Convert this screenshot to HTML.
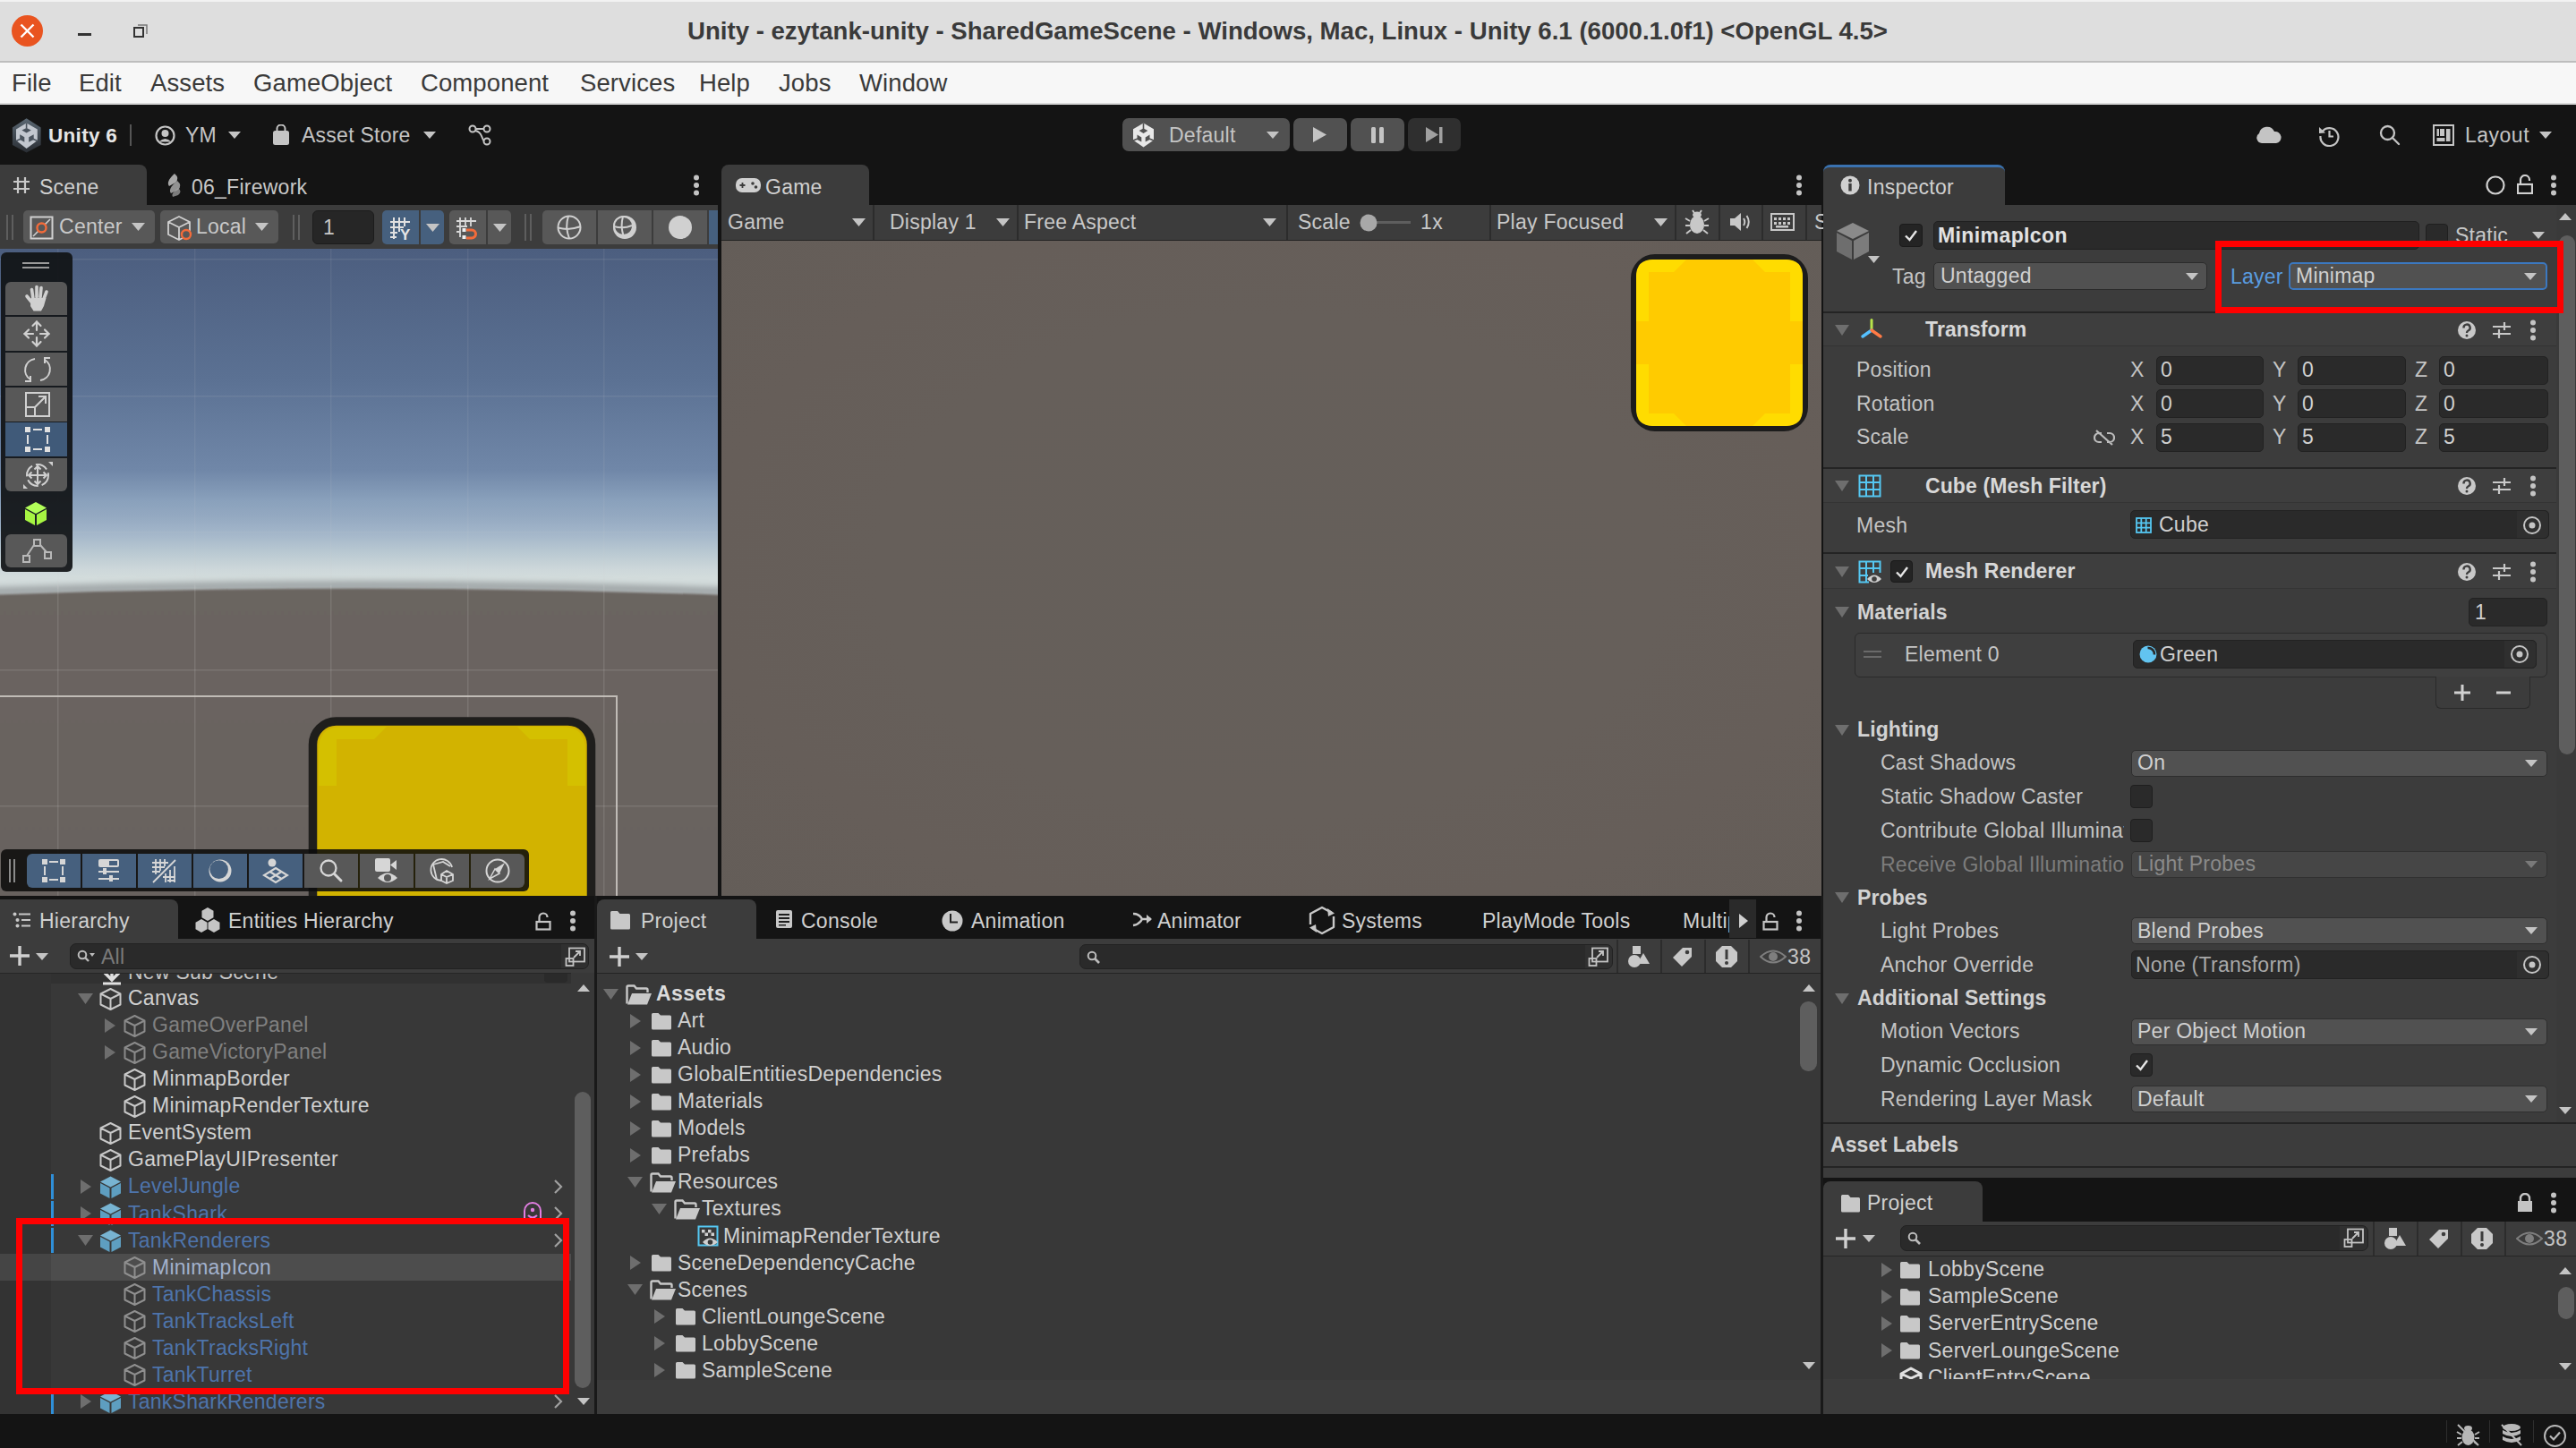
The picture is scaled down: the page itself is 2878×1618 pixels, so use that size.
<!DOCTYPE html>
<html><head><meta charset="utf-8"><style>
html,body{margin:0;padding:0;}
body{width:2878px;height:1618px;position:relative;overflow:hidden;background:#141414;font-family:"Liberation Sans", sans-serif;}
body div{position:absolute;box-sizing:border-box;}
.t{white-space:nowrap;font-family:"Liberation Sans", sans-serif;}
</style></head><body>
<div style="left:0px;top:0px;width:2878px;height:2px;background:#f2f2f2;"></div><div style="left:0px;top:2px;width:2878px;height:66px;background:#dedede;"></div><div style="left:0px;top:68px;width:2878px;height:2px;background:#bdbdbd;"></div><div style="left:0px;top:70px;width:2878px;height:45px;background:#f7f7f7;"></div><div style="left:0px;top:115px;width:2878px;height:2px;background:#d9d9d9;"></div><svg style="position:absolute;left:12px;top:16px;" width="38" height="38" viewBox="0 0 38 38"><circle cx="18.5" cy="18.5" r="17.5" fill="#e95420"/><path d="M11.5 11.5 L25.5 25.5 M25.5 11.5 L11.5 25.5" stroke="#fff" stroke-width="2.4"/></svg><div style="left:87px;top:37px;width:15px;height:3px;background:#333;"></div><svg style="position:absolute;left:148px;top:25px;" width="20" height="20" viewBox="0 0 20 20"><rect x="2" y="6" width="10" height="10" fill="none" stroke="#333" stroke-width="2"/><path d="M6 3 H16 V13" fill="none" stroke="#777" stroke-width="1.5"/></svg><div class="t" style="left:768px;top:15.0px;height:40px;line-height:40px;font-size:27.6px;color:#3a3a3a;font-weight:700;letter-spacing:0px;">Unity - ezytank-unity - SharedGameScene - Windows, Mac, Linux - Unity 6.1 (6000.1.0f1) &lt;OpenGL 4.5&gt;</div><div class="t" style="left:13px;top:73.0px;height:40px;line-height:40px;font-size:27.5px;color:#3a3a3a;font-weight:400;letter-spacing:0.1px;">File</div><div class="t" style="left:88px;top:73.0px;height:40px;line-height:40px;font-size:27.5px;color:#3a3a3a;font-weight:400;letter-spacing:0.1px;">Edit</div><div class="t" style="left:168px;top:73.0px;height:40px;line-height:40px;font-size:27.5px;color:#3a3a3a;font-weight:400;letter-spacing:0.1px;">Assets</div><div class="t" style="left:283px;top:73.0px;height:40px;line-height:40px;font-size:27.5px;color:#3a3a3a;font-weight:400;letter-spacing:0.1px;">GameObject</div><div class="t" style="left:470px;top:73.0px;height:40px;line-height:40px;font-size:27.5px;color:#3a3a3a;font-weight:400;letter-spacing:0.1px;">Component</div><div class="t" style="left:648px;top:73.0px;height:40px;line-height:40px;font-size:27.5px;color:#3a3a3a;font-weight:400;letter-spacing:0.1px;">Services</div><div class="t" style="left:781px;top:73.0px;height:40px;line-height:40px;font-size:27.5px;color:#3a3a3a;font-weight:400;letter-spacing:0.1px;">Help</div><div class="t" style="left:870px;top:73.0px;height:40px;line-height:40px;font-size:27.5px;color:#3a3a3a;font-weight:400;letter-spacing:0.1px;">Jobs</div><div class="t" style="left:960px;top:73.0px;height:40px;line-height:40px;font-size:27.5px;color:#3a3a3a;font-weight:400;letter-spacing:0.1px;">Window</div><svg style="position:absolute;left:13px;top:131px;" width="34" height="40" viewBox="0 0 34 40"><defs><linearGradient id="hx" x1="0" y1="0" x2="0" y2="1"><stop offset="0" stop-color="#5a6772"/><stop offset="1" stop-color="#2a2e34"/></linearGradient></defs><polygon points="16.6,1.2 32.6,11.6 32.6,30.9 16.6,39.5 0.9,30.9 0.9,11.6" fill="url(#hx)"/><polygon points="16.6,6.4 28.8,13.6 28.8,26.1 16.6,35 5,26.1 5,13.6" fill="#c2c7cf"/><g fill="#4a535d"><polygon points="11.4,14.5 16.6,11.9 21.8,14.5 16.6,17.6"/><polygon points="9.2,19.2 14.3,22.3 14.3,27.8 9.2,25"/><polygon points="24.7,19.2 19.2,22.3 19.2,27.8 24.7,25"/></g><g stroke="#4a535d" stroke-width="1.6"><path d="M16.6 6.4 V12.5 M5 26.5 L10 24.3 M28.8 26.5 L23.8 24.3"/></g></svg><div class="t" style="left:54px;top:136.5px;height:29px;line-height:29px;font-size:22.5px;color:#e6e6e6;font-weight:700;letter-spacing:0.3px;">Unity 6</div><div style="left:145px;top:139px;width:2px;height:24px;background:#555;"></div><svg style="position:absolute;left:173px;top:140px;" width="23" height="23" viewBox="0 0 23 23"><circle cx="11.5" cy="11.5" r="10" fill="none" stroke="#c4c4c4" stroke-width="2.2"/><circle cx="11.5" cy="9" r="4" fill="#c4c4c4"/><path d="M4.5 18.5 Q11.5 11.5 18.5 18.5" fill="#c4c4c4"/></svg><div class="t" style="left:207px;top:136.5px;height:29px;line-height:29px;font-size:23px;color:#c4c4c4;font-weight:400;letter-spacing:0.2px;">YM</div><svg style="position:absolute;left:254.5px;top:147.0px;" width="14" height="8" viewBox="0 0 14 8"><polygon points="0,0 14,0 7.0,8" fill="#c4c4c4"/></svg><svg style="position:absolute;left:304px;top:139px;" width="20" height="24" viewBox="0 0 20 24"><rect x="1" y="7" width="18" height="16" rx="2.5" fill="#c4c4c4"/><path d="M5.5 9 V4.5 A4.5 4 0 0 1 14.5 4.5 V9" fill="none" stroke="#c4c4c4" stroke-width="2"/></svg><div class="t" style="left:337px;top:136.5px;height:29px;line-height:29px;font-size:23px;color:#c4c4c4;font-weight:400;letter-spacing:0.25px;">Asset Store</div><svg style="position:absolute;left:473.0px;top:147.0px;" width="14" height="8" viewBox="0 0 14 8"><polygon points="0,0 14,0 7.0,8" fill="#c4c4c4"/></svg><svg style="position:absolute;left:523px;top:139px;" width="26" height="24" viewBox="0 0 26 24"><g fill="none" stroke="#c4c4c4" stroke-width="2"><circle cx="5" cy="5" r="3.5"/><circle cx="21" cy="5" r="3.5"/><circle cx="21" cy="19" r="3.5"/><path d="M8.5 5 H17.5 M8 7 Q13 8 15 13 Q16.5 17 17.5 18"/></g></svg><div style="left:1254px;top:132px;width:187px;height:37px;background:#515151;border-radius:7px;"></div><svg style="position:absolute;left:1264px;top:136px;" width="27" height="30" viewBox="0 0 27 30"><polygon points="13.5,1.5 25,8.3 25,20.5 13.5,28.5 2,20.5 2,8.3" fill="#e8e8e8"/><g fill="#515151"><polygon points="8.6,10 13.5,7.5 18.4,10 13.5,13"/><polygon points="6.5,14.5 11.3,17.4 11.3,22.6 6.5,20"/><polygon points="20.5,14.5 15.7,17.4 15.7,22.6 20.5,20"/></g><g stroke="#515151" stroke-width="1.6"><path d="M13.5 1.5 V8 M2 21 L7 19 M25 21 L20 19"/></g></svg><div class="t" style="left:1306px;top:136.5px;height:29px;line-height:29px;font-size:23px;color:#c4c4c4;font-weight:400;letter-spacing:0.25px;">Default</div><svg style="position:absolute;left:1415.0px;top:147.0px;" width="14" height="8" viewBox="0 0 14 8"><polygon points="0,0 14,0 7.0,8" fill="#c4c4c4"/></svg><div style="left:1445px;top:132px;width:60px;height:37px;background:#515151;border-radius:7px;"></div><svg style="position:absolute;left:1466px;top:141px;" width="17" height="19" viewBox="0 0 17 19"><polygon points="1,1 16,9.5 1,18" fill="#c4c4c4"/></svg><div style="left:1509px;top:132px;width:60px;height:37px;background:#515151;border-radius:7px;"></div><svg style="position:absolute;left:1531px;top:141px;" width="16" height="19" viewBox="0 0 16 19"><rect x="1" y="1" width="5" height="18" rx="1.5" fill="#c4c4c4"/><rect x="10" y="1" width="5" height="18" rx="1.5" fill="#c4c4c4"/></svg><div style="left:1573px;top:132px;width:59px;height:37px;background:#2f2f2f;border-radius:7px;"></div><svg style="position:absolute;left:1592px;top:141px;" width="20" height="19" viewBox="0 0 20 19"><polygon points="1,1 15,9.5 1,18" fill="#a0a0a0"/><rect x="16" y="1" width="3.5" height="18" fill="#a0a0a0"/></svg><svg style="position:absolute;left:2520px;top:140px;" width="29" height="21" viewBox="0 0 29 21"><path d="M7 20 A6 6 0 0 1 4 9 A9 9 0 0 1 21 7 A6.5 6.5 0 0 1 23 20 Z" fill="#c4c4c4"/></svg><svg style="position:absolute;left:2590px;top:139px;" width="25" height="25" viewBox="0 0 25 25"><g fill="none" stroke="#c4c4c4" stroke-width="2.2"><path d="M4.5 8 A10 10 0 1 1 2.5 13"/><path d="M12.5 7 V13.5 H17"/></g><polygon points="1,3 8,9.5 1,10" fill="#c4c4c4"/></svg><svg style="position:absolute;left:2658px;top:139px;" width="24" height="24" viewBox="0 0 24 24"><g fill="none" stroke="#c4c4c4" stroke-width="2.3"><circle cx="9.5" cy="9.5" r="7.5"/><path d="M15 15 L22 22" stroke-linecap="round"/></g></svg><svg style="position:absolute;left:2718px;top:139px;" width="24" height="24" viewBox="0 0 24 24"><rect x="1" y="1" width="22" height="22" fill="none" stroke="#c4c4c4" stroke-width="2"/><rect x="4.5" y="5" width="2.5" height="8" fill="#c4c4c4"/><rect x="8" y="5" width="5" height="8" fill="#c4c4c4"/><rect x="15" y="5" width="4.5" height="14" fill="#c4c4c4"/><rect x="4.5" y="15" width="9" height="4" fill="#c4c4c4"/></svg><div class="t" style="left:2754px;top:136.5px;height:29px;line-height:29px;font-size:23px;color:#c4c4c4;font-weight:400;letter-spacing:0.5px;">Layout</div><svg style="position:absolute;left:2837.0px;top:147.0px;" width="14" height="8" viewBox="0 0 14 8"><polygon points="0,0 14,0 7.0,8" fill="#c4c4c4"/></svg><div style="left:0px;top:184px;width:164px;height:45px;background:#3c3c3c;border-radius:0 8px 0 0;"></div><div style="left:0px;top:229px;width:802px;height:49px;background:#3c3c3c;"></div><div style="left:806px;top:184px;width:165px;height:45px;background:#3c3c3c;border-radius:8px 8px 0 0;"></div><div style="left:806px;top:229px;width:1229px;height:39px;background:#3c3c3c;"></div><div style="left:806px;top:268px;width:1229px;height:1px;background:#232323;"></div><div style="left:2037px;top:184px;width:203px;height:45px;background:#3c3c3c;border-radius:8px 8px 0 0;border-top:3px solid #3a72b0;"></div><div style="left:2037px;top:229px;width:841px;height:1027px;background:#3c3c3c;"></div><div style="left:0px;top:1005px;width:199px;height:44px;background:#3c3c3c;border-radius:0 8px 0 0;"></div><div style="left:0px;top:1049px;width:664px;height:38px;background:#3c3c3c;"></div><div style="left:0px;top:1087px;width:664px;height:493px;background:#383838;"></div><div style="left:667px;top:1005px;width:178px;height:44px;background:#3c3c3c;border-radius:8px 8px 0 0;"></div><div style="left:667px;top:1049px;width:1367px;height:39px;background:#3c3c3c;"></div><div style="left:667px;top:1087px;width:1367px;height:1px;background:#232323;"></div><div style="left:667px;top:1088px;width:1367px;height:454px;background:#383838;"></div><div style="left:667px;top:1542px;width:1367px;height:38px;background:#3c3c3c;"></div><div style="left:2037px;top:1256px;width:841px;height:47px;background:#3c3c3c;"></div><div style="left:2037px;top:1303px;width:841px;height:13px;background:#3c3c3c;"></div><div style="left:2037px;top:1320px;width:178px;height:45px;background:#3c3c3c;border-radius:8px 8px 0 0;"></div><div style="left:2037px;top:1365px;width:841px;height:38px;background:#3c3c3c;"></div><div style="left:2037px;top:1403px;width:841px;height:138px;background:#383838;"></div><div style="left:2037px;top:1541px;width:841px;height:40px;background:#3c3c3c;"></div><div style="left:0;top:278px;width:802px;height:723px;overflow:hidden;background:linear-gradient(180deg,#4c5e7f 0px,#5b7193 145px,#7087a8 247px,#8aa1bc 282px,#94a9c1 299px,#a2b5c9 317px,#bccbd3 342px,#cdd7da 358px,#d3dcdc 368px,#d3dcdc 390px);"><svg style="position:absolute;left:0px;top:0px;" width="802" height="723" viewBox="0 0 802 723"><defs><filter id="bl" filterUnits="userSpaceOnUse" x="-50" y="0" width="900" height="723"><feGaussianBlur stdDeviation="3"/></filter><filter id="bl2" filterUnits="userSpaceOnUse" x="-50" y="0" width="900" height="800"><feGaussianBlur stdDeviation="1.3"/></filter>
<linearGradient id="gh" x1="0" y1="0" x2="0" y2="1"><stop offset="0" stop-color="#6b6561"/><stop offset="1" stop-color="#68625e"/></linearGradient></defs>
<path d="M-20 384 Q 401 368.5 822 384" fill="none" stroke="#a3a9aa" stroke-width="11" filter="url(#bl)"/>
<path d="M-20 387.2 Q 401 371.75 822 387.3 L822 740 L-20 740 Z" fill="url(#gh)" filter="url(#bl2)"/></svg><svg style="position:absolute;left:0px;top:0px;" width="802" height="723" viewBox="0 0 802 723"><rect x="64" y="0" width="1.5" height="380" fill="rgba(215,215,215,0.09)"/><rect x="64" y="376" width="1.5" height="347" fill="rgba(215,215,215,0.15)"/><rect x="217" y="0" width="1.5" height="380" fill="rgba(215,215,215,0.09)"/><rect x="217" y="376" width="1.5" height="347" fill="rgba(215,215,215,0.15)"/><rect x="369" y="0" width="1.5" height="380" fill="rgba(215,215,215,0.09)"/><rect x="369" y="376" width="1.5" height="347" fill="rgba(215,215,215,0.15)"/><rect x="522" y="0" width="1.5" height="380" fill="rgba(215,215,215,0.09)"/><rect x="522" y="376" width="1.5" height="347" fill="rgba(215,215,215,0.15)"/><rect x="674" y="0" width="1.5" height="380" fill="rgba(215,215,215,0.09)"/><rect x="674" y="376" width="1.5" height="347" fill="rgba(215,215,215,0.15)"/><rect x="0" y="11" width="802" height="1.5" fill="rgba(215,215,215,0.10)"/><rect x="0" y="164" width="802" height="1.5" fill="rgba(215,215,215,0.10)"/><rect x="0" y="316" width="802" height="1.5" fill="rgba(215,215,215,0.10)"/><rect x="0" y="470" width="802" height="1.5" fill="rgba(215,215,215,0.15)"/><rect x="0" y="622" width="802" height="1.5" fill="rgba(215,215,215,0.15)"/></svg><svg style="position:absolute;left:0px;top:0px;" width="802" height="723" viewBox="0 0 802 723"><path d="M0 500 H689 V723" fill="none" stroke="#cfcac6" stroke-width="2" opacity="0.85"/></svg><svg style="position:absolute;left:0px;top:0px;" width="802" height="723" viewBox="0 0 802 723"><rect x="349.5" y="528" width="311" height="260" rx="26" fill="#d2b300" stroke="#1f1e1c" stroke-width="9.5"/>
<path d="M356 600 V560 Q356 534 382 534 H432 L418 548 H376 V600 Z M654 600 V560 Q654 534 628 534 H578 L592 548 H634 V600 Z" fill="#d5c300" opacity="0.8"/></svg></div><div style="left:1px;top:282px;width:80px;height:357px;background:rgba(17,19,22,0.93);border-radius:6px;"></div><svg style="position:absolute;left:21px;top:292px;" width="40" height="10" viewBox="0 0 40 10"><rect x="4" y="1" width="30" height="2" fill="#9a9a9a"/><rect x="4" y="6" width="30" height="2" fill="#9a9a9a"/></svg><div style="left:6px;top:315px;width:69px;height:37px;background:#585858;border-radius:6px 6px 0 0;"></div><div style="left:6px;top:354px;width:69px;height:38px;background:#585858;border-radius:0;"></div><div style="left:6px;top:394px;width:69px;height:37px;background:#585858;border-radius:0;"></div><div style="left:6px;top:433px;width:69px;height:38px;background:#585858;border-radius:0;"></div><div style="left:6px;top:472px;width:69px;height:38px;background:#405a79;border-radius:0;"></div><div style="left:6px;top:512px;width:69px;height:37px;background:#585858;border-radius:0 0 6px 6px;"></div><div style="left:6px;top:597px;width:69px;height:37px;background:#585858;border-radius:6px;"></div><svg style="position:absolute;left:26px;top:317px;" width="32" height="32" viewBox="0 0 32 32"><g stroke="#d0d0d0" stroke-width="3.6" stroke-linecap="round" fill="none"><path d="M11 17 L9.5 6.5"/><path d="M15 15 V3.5"/><path d="M19 15 L20 4.5"/><path d="M22.5 18 L26 9"/><path d="M10.5 22 L4 14"/></g><path d="M8.5 16 H25.5 L23 25 L20 30.5 H11.5 L8 25 Z" fill="#d0d0d0"/></svg><svg style="position:absolute;left:25px;top:357px;" width="32" height="32" viewBox="0 0 32 32"><g stroke="#d0d0d0" stroke-width="2.2" fill="none" stroke-linecap="round"><path d="M16 2.5 V12 M16 20 V29.5 M2.5 16 H12 M20 16 H29.5"/><path d="M11.5 7 L16 2.5 L20.5 7 M11.5 25 L16 29.5 L20.5 25 M7 11.5 L2.5 16 L7 20.5 M25 11.5 L29.5 16 L25 20.5"/></g></svg><svg style="position:absolute;left:25px;top:396px;" width="34" height="34" viewBox="0 0 34 34"><g stroke="#d0d0d0" stroke-width="2" fill="none"><path d="M14 5 A12.5 12.5 0 0 0 9 28"/><path d="M20 29 A12.5 12.5 0 0 0 25 6"/><path d="M3 30 H9 V24 M31 4 H25 V10"/></g></svg><svg style="position:absolute;left:26px;top:436px;" width="32" height="32" viewBox="0 0 32 32"><g stroke="#d0d0d0" stroke-width="2" fill="none"><rect x="3" y="3" width="26" height="26"/><rect x="3" y="19" width="10" height="10"/><path d="M13 19 L25 7 M17 7 H25 V15"/></g></svg><svg style="position:absolute;left:26px;top:475px;" width="32" height="32" viewBox="0 0 32 32"><g fill="#e0e0e0"><rect x="2" y="2" width="6" height="6"/><rect x="24" y="2" width="6" height="6"/><rect x="2" y="24" width="6" height="6"/><rect x="24" y="24" width="6" height="6"/><rect x="11" y="4" width="10" height="2"/><rect x="11" y="26" width="10" height="2"/><rect x="4" y="11" width="2" height="10"/><rect x="26" y="11" width="2" height="10"/></g></svg><svg style="position:absolute;left:25px;top:515px;" width="34" height="32" viewBox="0 0 34 32"><g stroke="#d0d0d0" stroke-width="2" fill="none"><circle cx="17" cy="16" r="12" stroke-dasharray="14 4"/><path d="M17 6 V26 M7 16 H27 M13.5 9.5 L17 6 L20.5 9.5 M13.5 22.5 L17 26 L20.5 22.5 M10.5 12.5 L7 16 L10.5 19.5 M23.5 12.5 L27 16 L23.5 19.5"/></g><polygon points="29,1 34,1 34,6" fill="#d0d0d0"/><polygon points="1,31 1,26 6,31" fill="#d0d0d0"/></svg><svg style="position:absolute;left:26px;top:560px;" width="28" height="28" viewBox="0 0 28 28"><polygon points="14,1 26,7.5 14,14 2,7.5" fill="#b2ff59"/><polygon points="2,9 13,15 13,27 2,21" fill="#a6f542"/><polygon points="26,9 15,15 15,27 26,21" fill="#a6f542"/></svg><svg style="position:absolute;left:24px;top:601px;" width="36" height="30" viewBox="0 0 36 30"><g stroke="#b8b8b8" stroke-width="2" fill="none"><rect x="14" y="2" width="7" height="7"/><rect x="2" y="20" width="7" height="7"/><rect x="26" y="16" width="7" height="7"/><path d="M14 8 L6 20 M21 8 L28 16"/></g></svg><div style="left:1px;top:949px;width:590px;height:47px;background:rgba(12,12,12,0.88);border-radius:6px;"></div><svg style="position:absolute;left:8px;top:958px;" width="10" height="30" viewBox="0 0 10 30"><rect x="2" y="2" width="2" height="26" fill="#8a8a8a"/><rect x="7" y="2" width="2" height="26" fill="#8a8a8a"/></svg><div style="left:30px;top:954px;width:60px;height:38px;background:#46607e;border-radius:6px 0 0 6px;"></div><div style="left:92px;top:954px;width:60px;height:38px;background:#46607e;border-radius:0;"></div><div style="left:154px;top:954px;width:60px;height:38px;background:#46607e;border-radius:0;"></div><div style="left:216px;top:954px;width:60px;height:38px;background:#46607e;border-radius:0;"></div><div style="left:278px;top:954px;width:60px;height:38px;background:#46607e;border-radius:0;"></div><div style="left:340px;top:954px;width:60px;height:38px;background:#585858;border-radius:0;"></div><div style="left:402px;top:954px;width:60px;height:38px;background:#585858;border-radius:0;"></div><div style="left:464px;top:954px;width:60px;height:38px;background:#585858;border-radius:0;"></div><div style="left:526px;top:954px;width:60px;height:38px;background:#585858;border-radius:0 6px 6px 0;"></div><svg style="position:absolute;left:45px;top:958px;" width="30" height="30" viewBox="0 0 30 30"><g fill="#d6d6d6"><rect x="2" y="2" width="6" height="6"/><rect x="22" y="2" width="6" height="6"/><rect x="2" y="22" width="6" height="6"/><rect x="22" y="22" width="6" height="6"/><rect x="10" y="4" width="10" height="2"/><rect x="10" y="24" width="10" height="2"/><rect x="4" y="10" width="2" height="10"/><rect x="24" y="10" width="2" height="10"/></g></svg><svg style="position:absolute;left:107px;top:958px;" width="30" height="30" viewBox="0 0 30 30"><g fill="#d6d6d6"><rect x="3" y="2" width="23" height="9" rx="2"/><rect x="3" y="15" width="23" height="2"/><rect x="3" y="23" width="23" height="2"/><rect x="8" y="12" width="4" height="7"/><rect x="15" y="20" width="4" height="7"/></g><rect x="15" y="4" width="9" height="5" fill="#46607e"/></svg><svg style="position:absolute;left:169px;top:958px;" width="30" height="30" viewBox="0 0 30 30"><g stroke="#d6d6d6" stroke-width="1.8" fill="none"><path d="M5 2 V19 M10 2 V15 M15 2 V10 M1 6 H19 M1 11 H15 M1 16 H10 M2 28 L27 3 M16 18 V28 M21 14 V28 M26 10 V28 M13 22 H27 M18 26 H27"/></g></svg><svg style="position:absolute;left:231px;top:958px;" width="30" height="30" viewBox="0 0 30 30"><circle cx="15" cy="15" r="12.5" fill="#d6d6d6"/><circle cx="13.6" cy="13.6" r="10.3" fill="#46607e"/></svg><svg style="position:absolute;left:293px;top:958px;" width="30" height="30" viewBox="0 0 30 30"><circle cx="11" cy="6" r="4.5" fill="#d6d6d6"/><g stroke="#d6d6d6" stroke-width="2.2" fill="none"><path d="M15 12 L28 20 L15 28 L2 20 Z M8.5 16 L21.5 24 M21.5 16 L8.5 24"/></g></svg><svg style="position:absolute;left:355px;top:958px;" width="30" height="30" viewBox="0 0 30 30"><g stroke="#d6d6d6" stroke-width="2.3" fill="none"><circle cx="12" cy="12" r="8.5"/><path d="M18.5 18.5 L26 26" stroke-linecap="round" stroke-width="3"/></g></svg><svg style="position:absolute;left:417px;top:958px;" width="30" height="30" viewBox="0 0 30 30"><rect x="2" y="1" width="17" height="15" rx="2" fill="#d6d6d6"/><polygon points="19,8.5 26,3 26,14" fill="#d6d6d6"/><path d="M5 23 Q16 12 27 23 Q16 33 5 23 Z" fill="#d6d6d6"/><circle cx="16" cy="23" r="4" fill="#585858"/></svg><svg style="position:absolute;left:479px;top:958px;" width="30" height="30" viewBox="0 0 30 30"><g stroke="#d6d6d6" stroke-width="1.8" fill="none"><path d="M14 26 A12 12 0 1 1 26 11"/><path d="M5 8 L16 5 L24 10 M5 8 L9 25"/><path d="M20 15 L27 19 V26 L20 29 L14 26 V19 Z M14 19 L20 22 L27 19 M20 22 V29"/></g></svg><svg style="position:absolute;left:541px;top:958px;" width="30" height="30" viewBox="0 0 30 30"><g stroke="#d6d6d6" stroke-width="2" fill="none"><circle cx="15" cy="15" r="12.5"/></g><polygon points="23,6 17,18 12,13" fill="#d6d6d6"/><polygon points="6,24 17,18 12,13" fill="none" stroke="#d6d6d6" stroke-width="1.5"/></svg><svg style="position:absolute;left:14px;top:197px;" width="20" height="20" viewBox="0 0 20 20"><g stroke="#c8c8c8" stroke-width="2.2"><path d="M6 1 V19 M14 1 V19 M1 6 H19 M1 14 H19"/></g></svg><div class="t" style="left:44px;top:194.5px;height:29px;line-height:29px;font-size:23px;color:#d0d0d0;font-weight:400;letter-spacing:0.25px;">Scene</div><svg style="position:absolute;left:184px;top:193px;" width="22" height="28" viewBox="0 0 22 28"><g fill="#a8a8a8"><path d="M11 1 Q17 6 12 11 L5 15 Q1 10 11 1 Z"/><path d="M14 9 Q20 14 15 19 L7 23 Q3 18 14 9 Z" opacity="0.85"/><path d="M15 17 Q20 21 15 25 L9 27 Q6 24 15 17 Z" opacity="0.7"/></g></svg><div class="t" style="left:214px;top:194.5px;height:29px;line-height:29px;font-size:23px;color:#c8c8c8;font-weight:400;letter-spacing:0.25px;">06_Firework</div><svg style="position:absolute;left:774px;top:195px;" width="8" height="24" viewBox="0 0 8 24"><circle cx="4" cy="3.5" r="3" fill="#c4c4c4"/><circle cx="4" cy="12" r="3" fill="#c4c4c4"/><circle cx="4" cy="20.5" r="3" fill="#c4c4c4"/></svg><svg style="position:absolute;left:6px;top:239px;" width="10" height="30" viewBox="0 0 10 30"><rect x="1" y="1" width="2" height="28" fill="#5e5e5e"/><rect x="7" y="1" width="2" height="28" fill="#5e5e5e"/></svg><div style="left:26px;top:235px;width:147px;height:37px;background:#585858;border-radius:5px;"></div><svg style="position:absolute;left:33px;top:241px;" width="27" height="27" viewBox="0 0 27 27"><rect x="1.5" y="1.5" width="24" height="24" fill="none" stroke="#d0d0d0" stroke-width="2"/><path d="M4 23 L23 4" stroke="#d0d0d0" stroke-width="1.6"/><circle cx="13.5" cy="13.5" r="5" fill="#585858" stroke="#f26b3a" stroke-width="2.4"/></svg><div class="t" style="left:66px;top:239.0px;height:29px;line-height:29px;font-size:23px;color:#c8c8c8;font-weight:400;letter-spacing:0.3px;">Center</div><svg style="position:absolute;left:146.5px;top:249.0px;" width="15" height="9" viewBox="0 0 15 9"><polygon points="0,0 15,0 7.5,9" fill="#c4c4c4"/></svg><div style="left:179px;top:235px;width:132px;height:37px;background:#585858;border-radius:5px;"></div><svg style="position:absolute;left:186px;top:240px;" width="30" height="30" viewBox="0 0 30 30"><g fill="none" stroke="#d0d0d0" stroke-width="1.8" stroke-linejoin="round"><path d="M14 2 L26 8 L26 22 L14 28 L2 22 L2 8 Z M2 8 L14 14 L26 8 M14 14 V28"/></g><circle cx="22" cy="22" r="5" fill="#585858" stroke="#f26b3a" stroke-width="2.4"/></svg><div class="t" style="left:219px;top:239.0px;height:29px;line-height:29px;font-size:23px;color:#c8c8c8;font-weight:400;letter-spacing:0.25px;">Local</div><svg style="position:absolute;left:284.5px;top:249.0px;" width="15" height="9" viewBox="0 0 15 9"><polygon points="0,0 15,0 7.5,9" fill="#c4c4c4"/></svg><svg style="position:absolute;left:326px;top:239px;" width="10" height="30" viewBox="0 0 10 30"><rect x="1" y="1" width="2" height="28" fill="#5e5e5e"/><rect x="7" y="1" width="2" height="28" fill="#5e5e5e"/></svg><div style="left:349px;top:235px;width:69px;height:38px;background:#262626;border-radius:6px;border:1px solid #1c1c1c;"></div><div class="t" style="left:361px;top:239.5px;height:29px;line-height:29px;font-size:23px;color:#c8c8c8;font-weight:400;letter-spacing:0.2px;">1</div><div style="left:427px;top:235px;width:41px;height:38px;background:#46607e;border-radius:5px 0 0 5px;"></div><div style="left:470px;top:235px;width:26px;height:38px;background:#46607e;border-radius:0 5px 5px 0;"></div><svg style="position:absolute;left:434px;top:241px;" width="28" height="27" viewBox="0 0 28 27"><g stroke="#e0e0e0" stroke-width="2"><path d="M6 2 V26 M12 2 V18 M18 2 V12 M2 7 H24 M2 13 H17 M2 19 H10 M2 24 H9"/></g><text x="13" y="27" font-family="Liberation Sans" font-weight="700" font-size="17" fill="#e6e6e6">Y</text></svg><svg style="position:absolute;left:475.5px;top:249.5px;" width="15" height="9" viewBox="0 0 15 9"><polygon points="0,0 15,0 7.5,9" fill="#c4c4c4"/></svg><div style="left:502px;top:235px;width:41px;height:38px;background:#585858;border-radius:5px 0 0 5px;"></div><div style="left:545px;top:235px;width:26px;height:38px;background:#585858;border-radius:0 5px 5px 0;"></div><svg style="position:absolute;left:508px;top:241px;" width="30" height="28" viewBox="0 0 30 28"><g stroke="#d8d8d8" stroke-width="1.8"><path d="M6 2 V24 M12 2 V12 M18 2 V12 M2 6 H24 M2 12 H14 M2 18 H6"/></g><rect x="8.5" y="14" width="4" height="4" fill="#eee"/><rect x="8.5" y="22" width="4" height="4" fill="#eee"/><path d="M13 16 H19 A4.5 4.5 0 0 1 19 25 H13" fill="none" stroke="#f26b3a" stroke-width="3"/></svg><svg style="position:absolute;left:550.5px;top:249.5px;" width="15" height="9" viewBox="0 0 15 9"><polygon points="0,0 15,0 7.5,9" fill="#c4c4c4"/></svg><svg style="position:absolute;left:582px;top:238px;" width="14" height="32" viewBox="0 0 14 32"><rect x="4" y="1" width="2" height="30" fill="#5e5e5e"/><rect x="10" y="1" width="2" height="30" fill="#5e5e5e"/></svg><div style="left:606px;top:235px;width:60px;height:38px;background:#585858;border-radius:5px 0 0 5px;"></div><div style="left:668px;top:235px;width:60px;height:38px;background:#585858;"></div><div style="left:730px;top:235px;width:60px;height:38px;background:#585858;"></div><div style="left:792px;top:235px;width:10px;height:38px;background:#46607e;"></div><svg style="position:absolute;left:622px;top:240px;" width="28" height="28" viewBox="0 0 28 28"><g fill="none" stroke="#d0d0d0" stroke-width="2"><circle cx="14" cy="14" r="12.5"/><path d="M13 1.5 Q9 14 14 26.5 M1.5 14.5 Q14 18 26.5 13"/></g></svg><svg style="position:absolute;left:684px;top:240px;" width="28" height="28" viewBox="0 0 28 28"><circle cx="14" cy="14" r="13" fill="#d0d0d0"/><circle cx="12.5" cy="12.5" r="10.5" fill="#585858"/><g fill="none" stroke="#d0d0d0" stroke-width="2"><circle cx="12.5" cy="12.5" r="10.5"/><path d="M12 2 Q9 13 12.5 23 M2 13 Q12.5 16 22 12"/></g></svg><svg style="position:absolute;left:746px;top:240px;" width="28" height="28" viewBox="0 0 28 28"><circle cx="14" cy="14" r="13" fill="#d0d0d0"/></svg><svg style="position:absolute;left:822px;top:198px;" width="28" height="18" viewBox="0 0 28 18"><path d="M7 1 H21 A7 7 0 0 1 28 8 V10 A7 7 0 0 1 21 17 H7 A7 7 0 0 1 0 10 V8 A7 7 0 0 1 7 1 Z" fill="#d0d0d0"/><path d="M4.5 9 H10.5 M7.5 6 V12" stroke="#3c3c3c" stroke-width="1.8"/><circle cx="19" cy="7" r="1.8" fill="#3c3c3c"/><circle cx="22.5" cy="11" r="1.8" fill="#3c3c3c"/></svg><div class="t" style="left:855px;top:194.5px;height:29px;line-height:29px;font-size:23px;color:#d0d0d0;font-weight:400;letter-spacing:0.25px;">Game</div><svg style="position:absolute;left:2006px;top:195px;" width="8" height="24" viewBox="0 0 8 24"><circle cx="4" cy="3.5" r="3" fill="#c4c4c4"/><circle cx="4" cy="12" r="3" fill="#c4c4c4"/><circle cx="4" cy="20.5" r="3" fill="#c4c4c4"/></svg><div style="left:975px;top:229px;width:2px;height:39px;background:#2c2c2c;"></div><div class="t" style="left:813px;top:234.0px;height:29px;line-height:29px;font-size:23px;color:#c8c8c8;font-weight:400;letter-spacing:0.25px;">Game</div><svg style="position:absolute;left:951.5px;top:244.0px;" width="15" height="9" viewBox="0 0 15 9"><polygon points="0,0 15,0 7.5,9" fill="#c4c4c4"/></svg><div style="left:1136px;top:229px;width:2px;height:39px;background:#2c2c2c;"></div><div class="t" style="left:994px;top:234.0px;height:29px;line-height:29px;font-size:23px;color:#c8c8c8;font-weight:400;letter-spacing:0.25px;">Display 1</div><svg style="position:absolute;left:1112.5px;top:244.0px;" width="15" height="9" viewBox="0 0 15 9"><polygon points="0,0 15,0 7.5,9" fill="#c4c4c4"/></svg><div class="t" style="left:1144px;top:234.0px;height:29px;line-height:29px;font-size:23px;color:#c8c8c8;font-weight:400;letter-spacing:0.25px;">Free Aspect</div><svg style="position:absolute;left:1410.5px;top:244.0px;" width="15" height="9" viewBox="0 0 15 9"><polygon points="0,0 15,0 7.5,9" fill="#c4c4c4"/></svg><div style="left:1437px;top:229px;width:2px;height:39px;background:#2c2c2c;"></div><div style="left:1664px;top:229px;width:2px;height:39px;background:#2c2c2c;"></div><div style="left:1871px;top:229px;width:2px;height:39px;background:#2c2c2c;"></div><div style="left:1920px;top:229px;width:2px;height:39px;background:#2c2c2c;"></div><div style="left:1968px;top:229px;width:2px;height:39px;background:#2c2c2c;"></div><div style="left:2017px;top:229px;width:2px;height:39px;background:#2c2c2c;"></div><div class="t" style="left:1450px;top:234.0px;height:29px;line-height:29px;font-size:23px;color:#c8c8c8;font-weight:400;letter-spacing:0.25px;">Scale</div><div style="left:1528px;top:247px;width:48px;height:3px;background:#5e5e5e;"></div><svg style="position:absolute;left:1519px;top:239px;" width="20" height="20" viewBox="0 0 20 20"><circle cx="10" cy="10" r="9.5" fill="#a8a8a8"/></svg><div class="t" style="left:1587px;top:234.0px;height:29px;line-height:29px;font-size:23px;color:#c8c8c8;font-weight:400;letter-spacing:0.5px;">1x</div><div class="t" style="left:1672px;top:234.0px;height:29px;line-height:29px;font-size:23px;color:#c8c8c8;font-weight:400;letter-spacing:0.25px;">Play Focused</div><svg style="position:absolute;left:1847.5px;top:244.0px;" width="15" height="9" viewBox="0 0 15 9"><polygon points="0,0 15,0 7.5,9" fill="#c4c4c4"/></svg><svg style="position:absolute;left:1882px;top:234px;" width="28" height="29" viewBox="0 0 28 29"><g fill="#c8c8c8"><ellipse cx="14" cy="17" rx="8" ry="10"/><ellipse cx="14" cy="6" rx="5" ry="3.5"/></g><g stroke="#c8c8c8" stroke-width="2" fill="none"><path d="M1 10 L6 13 M27 10 L22 13 M1 18 H6 M27 18 H22 M2 27 L7 23 M26 27 L21 23 M9 1 L11 4 M19 1 L17 4"/></g></svg><svg style="position:absolute;left:1932px;top:237px;" width="24" height="22" viewBox="0 0 24 22"><g fill="#c8c8c8"><rect x="1" y="7" width="5" height="8"/><polygon points="6,7 13,1 13,21 6,15"/></g><g stroke="#c8c8c8" stroke-width="2" fill="none"><path d="M16 7 Q18.5 11 16 15 M19.5 4 Q24 11 19.5 18"/></g></svg><svg style="position:absolute;left:1978px;top:238px;" width="27" height="20" viewBox="0 0 27 20"><rect x="1" y="1" width="25" height="18" fill="none" stroke="#c8c8c8" stroke-width="2"/><g fill="#c8c8c8"><rect x="4" y="5" width="3" height="3"/><rect x="9" y="5" width="3" height="3"/><rect x="14" y="5" width="3" height="3"/><rect x="19" y="5" width="3" height="3"/><rect x="4" y="10" width="3" height="3"/><rect x="9" y="10" width="3" height="3"/><rect x="14" y="10" width="3" height="3"/><rect x="19" y="10" width="3" height="3"/><rect x="6" y="14" width="14" height="2.5"/></g></svg><div class="t" style="left:2027px;top:234.0px;height:29px;line-height:29px;font-size:23px;color:#c8c8c8;font-weight:400;letter-spacing:0.2px;">S</div><div style="left:806px;top:269px;width:1229px;height:732px;overflow:hidden;background:radial-gradient(ellipse 1250px 800px at 614px 364px,#655f5a 0%,#665f5a 35%,#665e59 50%,#635d58 75%,#615b56 100%);"><svg style="position:absolute;left:0px;top:0px;" width="1229" height="732" viewBox="0 0 1229 732"><rect x="1019" y="18" width="192" height="192" rx="24" fill="#ffcb00" stroke="#1c1c1c" stroke-width="6"/>
<path d="M1022 90 V40 Q1022 21 1041 21 H1078 L1064 35 H1036 V90 Z M1208 90 V40 Q1208 21 1189 21 H1152 L1166 35 H1194 V90 Z M1022 138 V188 Q1022 207 1041 207 H1078 L1064 193 H1036 V138 Z M1208 138 V188 Q1208 207 1189 207 H1152 L1166 193 H1194 V138 Z" fill="#ffdc00"/></svg></div><svg style="position:absolute;left:2056px;top:196px;" width="22" height="22" viewBox="0 0 22 22"><circle cx="11" cy="11" r="10.5" fill="#d0d0d0"/><rect x="9.3" y="9" width="3.4" height="8.5" fill="#3c3c3c"/><circle cx="11" cy="5.8" r="2" fill="#3c3c3c"/></svg><div class="t" style="left:2086px;top:194.5px;height:29px;line-height:29px;font-size:23px;color:#d0d0d0;font-weight:400;letter-spacing:0.25px;">Inspector</div><svg style="position:absolute;left:2777px;top:196px;" width="22" height="22" viewBox="0 0 22 22"><circle cx="11" cy="11" r="9.5" fill="none" stroke="#d0d0d0" stroke-width="2.2"/></svg><svg style="position:absolute;left:2812px;top:195px;" width="18" height="22" viewBox="0 0 18 22"><rect x="1" y="11" width="16" height="10" fill="none" stroke="#d0d0d0" stroke-width="2.2"/><path d="M4 11 V6 A5 5 0 0 1 14 6 V7" fill="none" stroke="#d0d0d0" stroke-width="2.2"/></svg><svg style="position:absolute;left:2849px;top:195px;" width="8" height="24" viewBox="0 0 8 24"><circle cx="4" cy="3.5" r="3" fill="#c4c4c4"/><circle cx="4" cy="12" r="3" fill="#c4c4c4"/><circle cx="4" cy="20.5" r="3" fill="#c4c4c4"/></svg><div style="left:2037px;top:229px;width:819px;height:119px;background:#3c3c3c;"></div><div style="left:2037px;top:348px;width:819px;height:2px;background:#242424;"></div><svg style="position:absolute;left:2050px;top:248px;" width="42" height="44" viewBox="0 0 42 44"><polygon points="20,1 38,10 20,19 2,10" fill="#8a8a8a"/><polygon points="2,12 19,21 19,42 2,33" fill="#6e6e6e"/><polygon points="38,12 21,21 21,42 38,33" fill="#7c7c7c"/></svg><svg style="position:absolute;left:2086.5px;top:286.0px;" width="13" height="8" viewBox="0 0 13 8"><polygon points="0,0 13,0 6.5,8" fill="#c4c4c4"/></svg><div style="left:2122px;top:250px;width:26px;height:26px;background:#242424;border-radius:4px;border:1px solid #1a1a1a;"></div><svg style="position:absolute;left:2126px;top:254px;" width="18" height="18" viewBox="0 0 18 18"><path d="M3 9.5 L7.5 14 L15 4" fill="none" stroke="#e6e6e6" stroke-width="2.4"/></svg><div style="left:2160px;top:247px;width:543px;height:32px;background:#2a2a2a;border-radius:5px;border:1px solid #202020;"></div><div class="t" style="left:2165px;top:248.5px;height:29px;line-height:29px;font-size:23px;color:#e2e2e2;font-weight:700;letter-spacing:0.4px;">MinimapIcon</div><div style="left:2710px;top:250px;width:25px;height:25px;background:#2a2a2a;border-radius:4px;border:1px solid #1f1f1f;"></div><div class="t" style="left:2743px;top:248.5px;height:29px;line-height:29px;font-size:23px;color:#c8c8c8;font-weight:400;letter-spacing:0.25px;">Static</div><svg style="position:absolute;left:2829.0px;top:259.0px;" width="14" height="8" viewBox="0 0 14 8"><polygon points="0,0 14,0 7.0,8" fill="#c4c4c4"/></svg><div class="t" style="left:2114px;top:294.5px;height:29px;line-height:29px;font-size:23px;color:#c4c4c4;font-weight:400;letter-spacing:0.25px;">Tag</div><div style="left:2160px;top:293px;width:306px;height:31px;background:#515151;border-radius:5px;border:1px solid #2b2b2b;"></div><div class="t" style="left:2168px;top:294.0px;height:29px;line-height:29px;font-size:23px;color:#d0d0d0;font-weight:400;letter-spacing:0.25px;">Untagged</div><svg style="position:absolute;left:2442.0px;top:305.0px;" width="14" height="8" viewBox="0 0 14 8"><polygon points="0,0 14,0 7.0,8" fill="#c4c4c4"/></svg><div class="t" style="left:2492px;top:294.5px;height:29px;line-height:29px;font-size:23px;color:#5a9ce0;font-weight:400;letter-spacing:0.25px;">Layer</div><div style="left:2557px;top:293px;width:289px;height:31px;background:#515151;border-radius:5px;border:2px solid #3b78c0;"></div><div class="t" style="left:2565px;top:294.0px;height:29px;line-height:29px;font-size:23px;color:#d0d0d0;font-weight:400;letter-spacing:0.25px;">Minimap</div><svg style="position:absolute;left:2820.0px;top:305.0px;" width="14" height="8" viewBox="0 0 14 8"><polygon points="0,0 14,0 7.0,8" fill="#c4c4c4"/></svg><div style="left:2037px;top:350px;width:819px;height:37px;background:#3e3e3e;"></div><div style="left:2037px;top:386px;width:819px;height:1px;background:#343434;"></div><svg style="position:absolute;left:2050.0px;top:362.5px;" width="16" height="12" viewBox="0 0 16 12"><polygon points="0,0 16,0 8.0,12" fill="#6e6e6e"/></svg><svg style="position:absolute;left:2077px;top:354.5px;" width="28" height="28" viewBox="0 0 28 28"><rect x="12.5" y="1" width="3" height="13" rx="1.5" fill="#b7e34a"/><path d="M14 14 L4 21" stroke="#55c0ff" stroke-width="3.4" stroke-linecap="round"/><path d="M14 14 L24 21" stroke="#ff7a45" stroke-width="3.4" stroke-linecap="round"/></svg><div class="t" style="left:2151px;top:354.0px;height:29px;line-height:29px;font-size:23px;color:#d8d8d8;font-weight:700;letter-spacing:0.1px;">Transform</div><svg style="position:absolute;left:2745px;top:357.5px;" width="22" height="22" viewBox="0 0 22 22"><circle cx="11" cy="11" r="10" fill="#c8c8c8"/><path d="M7.5 8.5 A3.6 3.6 0 1 1 12.5 11.5 Q11 12.3 11 14" fill="none" stroke="#3e3e3e" stroke-width="2.4"/><circle cx="11" cy="17" r="1.5" fill="#3e3e3e"/></svg><svg style="position:absolute;left:2784px;top:357.5px;" width="22" height="22" viewBox="0 0 22 22"><g stroke="#c8c8c8" stroke-width="2.2"><path d="M1 7 H21 M1 15 H21"/><path d="M14 2 V11 M8 10 V20"/></g></svg><svg style="position:absolute;left:2826px;top:356.5px;" width="8" height="24" viewBox="0 0 8 24"><circle cx="4" cy="3.5" r="3" fill="#c4c4c4"/><circle cx="4" cy="12" r="3" fill="#c4c4c4"/><circle cx="4" cy="20.5" r="3" fill="#c4c4c4"/></svg><div style="left:2037px;top:387px;width:819px;height:136px;background:#3c3c3c;"></div><div class="t" style="left:2074px;top:399.0px;height:29px;line-height:29px;font-size:23px;color:#c4c4c4;font-weight:400;letter-spacing:0.25px;">Position</div><div class="t" style="left:2380px;top:399.0px;height:29px;line-height:29px;font-size:23px;color:#c4c4c4;font-weight:400;letter-spacing:0.2px;">X</div><div style="left:2409px;top:397.5px;width:120px;height:32.0px;background:#2a2a2a;border-radius:5px;border:1px solid #222;"></div><div class="t" style="left:2414px;top:399.0px;height:29px;line-height:29px;font-size:23px;color:#d0d0d0;font-weight:400;letter-spacing:0.2px;">0</div><div class="t" style="left:2539px;top:399.0px;height:29px;line-height:29px;font-size:23px;color:#c4c4c4;font-weight:400;letter-spacing:0.2px;">Y</div><div style="left:2567px;top:397.5px;width:121px;height:32.0px;background:#2a2a2a;border-radius:5px;border:1px solid #222;"></div><div class="t" style="left:2572px;top:399.0px;height:29px;line-height:29px;font-size:23px;color:#d0d0d0;font-weight:400;letter-spacing:0.2px;">0</div><div class="t" style="left:2698px;top:399.0px;height:29px;line-height:29px;font-size:23px;color:#c4c4c4;font-weight:400;letter-spacing:0.2px;">Z</div><div style="left:2725px;top:397.5px;width:122px;height:32.0px;background:#2a2a2a;border-radius:5px;border:1px solid #222;"></div><div class="t" style="left:2730px;top:399.0px;height:29px;line-height:29px;font-size:23px;color:#d0d0d0;font-weight:400;letter-spacing:0.2px;">0</div><div class="t" style="left:2074px;top:436.5px;height:29px;line-height:29px;font-size:23px;color:#c4c4c4;font-weight:400;letter-spacing:0.25px;">Rotation</div><div class="t" style="left:2380px;top:436.5px;height:29px;line-height:29px;font-size:23px;color:#c4c4c4;font-weight:400;letter-spacing:0.2px;">X</div><div style="left:2409px;top:435px;width:120px;height:32px;background:#2a2a2a;border-radius:5px;border:1px solid #222;"></div><div class="t" style="left:2414px;top:436.5px;height:29px;line-height:29px;font-size:23px;color:#d0d0d0;font-weight:400;letter-spacing:0.2px;">0</div><div class="t" style="left:2539px;top:436.5px;height:29px;line-height:29px;font-size:23px;color:#c4c4c4;font-weight:400;letter-spacing:0.2px;">Y</div><div style="left:2567px;top:435px;width:121px;height:32px;background:#2a2a2a;border-radius:5px;border:1px solid #222;"></div><div class="t" style="left:2572px;top:436.5px;height:29px;line-height:29px;font-size:23px;color:#d0d0d0;font-weight:400;letter-spacing:0.2px;">0</div><div class="t" style="left:2698px;top:436.5px;height:29px;line-height:29px;font-size:23px;color:#c4c4c4;font-weight:400;letter-spacing:0.2px;">Z</div><div style="left:2725px;top:435px;width:122px;height:32px;background:#2a2a2a;border-radius:5px;border:1px solid #222;"></div><div class="t" style="left:2730px;top:436.5px;height:29px;line-height:29px;font-size:23px;color:#d0d0d0;font-weight:400;letter-spacing:0.2px;">0</div><div class="t" style="left:2074px;top:474.0px;height:29px;line-height:29px;font-size:23px;color:#c4c4c4;font-weight:400;letter-spacing:0.25px;">Scale</div><svg style="position:absolute;left:2339px;top:478.5px;" width="24" height="20" viewBox="0 0 24 20"><g fill="none" stroke="#bcbcbc" stroke-width="2.2"><path d="M9 5 H6 A5 5 0 0 0 6 15 H9 M15 5 H18 A5 5 0 0 1 18 15 H15 M3 2 L21 18"/></g></svg><div class="t" style="left:2380px;top:474.0px;height:29px;line-height:29px;font-size:23px;color:#c4c4c4;font-weight:400;letter-spacing:0.2px;">X</div><div style="left:2409px;top:472.5px;width:120px;height:32.0px;background:#2a2a2a;border-radius:5px;border:1px solid #222;"></div><div class="t" style="left:2414px;top:474.0px;height:29px;line-height:29px;font-size:23px;color:#d0d0d0;font-weight:400;letter-spacing:0.2px;">5</div><div class="t" style="left:2539px;top:474.0px;height:29px;line-height:29px;font-size:23px;color:#c4c4c4;font-weight:400;letter-spacing:0.2px;">Y</div><div style="left:2567px;top:472.5px;width:121px;height:32.0px;background:#2a2a2a;border-radius:5px;border:1px solid #222;"></div><div class="t" style="left:2572px;top:474.0px;height:29px;line-height:29px;font-size:23px;color:#d0d0d0;font-weight:400;letter-spacing:0.2px;">5</div><div class="t" style="left:2698px;top:474.0px;height:29px;line-height:29px;font-size:23px;color:#c4c4c4;font-weight:400;letter-spacing:0.2px;">Z</div><div style="left:2725px;top:472.5px;width:122px;height:32.0px;background:#2a2a2a;border-radius:5px;border:1px solid #222;"></div><div class="t" style="left:2730px;top:474.0px;height:29px;line-height:29px;font-size:23px;color:#d0d0d0;font-weight:400;letter-spacing:0.2px;">5</div><div style="left:2037px;top:522px;width:819px;height:2px;background:#242424;"></div><div style="left:2037px;top:524px;width:819px;height:38px;background:#3e3e3e;"></div><div style="left:2037px;top:561px;width:819px;height:1px;background:#343434;"></div><svg style="position:absolute;left:2050.0px;top:537.0px;" width="16" height="12" viewBox="0 0 16 12"><polygon points="0,0 16,0 8.0,12" fill="#6e6e6e"/></svg><svg style="position:absolute;left:2076px;top:530.0px;" width="26" height="26" viewBox="0 0 26 26"><g fill="none" stroke="#55c7f2" stroke-width="2"><rect x="1.5" y="1.5" width="23" height="23"/><path d="M9 1.5 V24.5 M17 1.5 V24.5 M1.5 9 H24.5 M1.5 17 H24.5"/></g></svg><div class="t" style="left:2151px;top:528.5px;height:29px;line-height:29px;font-size:23px;color:#d8d8d8;font-weight:700;letter-spacing:0.1px;">Cube (Mesh Filter)</div><svg style="position:absolute;left:2745px;top:532.0px;" width="22" height="22" viewBox="0 0 22 22"><circle cx="11" cy="11" r="10" fill="#c8c8c8"/><path d="M7.5 8.5 A3.6 3.6 0 1 1 12.5 11.5 Q11 12.3 11 14" fill="none" stroke="#3e3e3e" stroke-width="2.4"/><circle cx="11" cy="17" r="1.5" fill="#3e3e3e"/></svg><svg style="position:absolute;left:2784px;top:532.0px;" width="22" height="22" viewBox="0 0 22 22"><g stroke="#c8c8c8" stroke-width="2.2"><path d="M1 7 H21 M1 15 H21"/><path d="M14 2 V11 M8 10 V20"/></g></svg><svg style="position:absolute;left:2826px;top:531.0px;" width="8" height="24" viewBox="0 0 8 24"><circle cx="4" cy="3.5" r="3" fill="#c4c4c4"/><circle cx="4" cy="12" r="3" fill="#c4c4c4"/><circle cx="4" cy="20.5" r="3" fill="#c4c4c4"/></svg><div style="left:2037px;top:562px;width:819px;height:55px;background:#3c3c3c;"></div><div class="t" style="left:2074px;top:572.5px;height:29px;line-height:29px;font-size:23px;color:#c4c4c4;font-weight:400;letter-spacing:0.25px;">Mesh</div><div style="left:2380px;top:570px;width:468px;height:32px;background:#2a2a2a;border-radius:5px;border:1px solid #222;"></div><div style="left:2812px;top:571px;width:35px;height:30px;background:#2f2f2f;border-radius:0 5px 5px 0;"></div><svg style="position:absolute;left:2386px;top:578px;" width="18" height="18" viewBox="0 0 18 18"><g fill="none" stroke="#55c7f2" stroke-width="1.8"><rect x="1" y="1" width="16" height="16"/><path d="M6.3 1 V17 M11.7 1 V17 M1 6.3 H17 M1 11.7 H17"/></g></svg><div class="t" style="left:2412px;top:571.5px;height:29px;line-height:29px;font-size:23px;color:#d0d0d0;font-weight:400;letter-spacing:0.25px;">Cube</div><svg style="position:absolute;left:2818px;top:576px;" width="22" height="22" viewBox="0 0 22 22"><circle cx="11" cy="11" r="9" fill="none" stroke="#c4c4c4" stroke-width="2"/><circle cx="11" cy="11" r="3.5" fill="#c4c4c4"/></svg><div style="left:2037px;top:617px;width:819px;height:2px;background:#242424;"></div><div style="left:2037px;top:619px;width:819px;height:39px;background:#3e3e3e;"></div><div style="left:2037px;top:657px;width:819px;height:1px;background:#343434;"></div><svg style="position:absolute;left:2050.0px;top:632.5px;" width="16" height="12" viewBox="0 0 16 12"><polygon points="0,0 16,0 8.0,12" fill="#6e6e6e"/></svg><svg style="position:absolute;left:2076px;top:625.5px;" width="27" height="28" viewBox="0 0 27 28"><g fill="none" stroke="#55c7f2" stroke-width="2"><path d="M12 24.5 H1.5 V1.5 H24.5 V14 M9 1.5 V24.5 M17 1.5 V14 M1.5 9 H24.5 M1.5 17 H11"/></g><path d="M10 21 Q18 12 26 21 Q18 29 10 21 Z" fill="#d0d0d0"/><circle cx="18" cy="21" r="2.8" fill="#3e3e3e"/></svg><div style="left:2112px;top:626.0px;width:25px;height:25.0px;background:#242424;border-radius:4px;border:1px solid #1a1a1a;"></div><svg style="position:absolute;left:2115.5px;top:629.5px;" width="18" height="18" viewBox="0 0 18 18"><path d="M3 9.5 L7.5 14 L15 4" fill="none" stroke="#e6e6e6" stroke-width="2.4"/></svg><div class="t" style="left:2151px;top:624.0px;height:29px;line-height:29px;font-size:23px;color:#d8d8d8;font-weight:700;letter-spacing:0.1px;">Mesh Renderer</div><svg style="position:absolute;left:2745px;top:627.5px;" width="22" height="22" viewBox="0 0 22 22"><circle cx="11" cy="11" r="10" fill="#c8c8c8"/><path d="M7.5 8.5 A3.6 3.6 0 1 1 12.5 11.5 Q11 12.3 11 14" fill="none" stroke="#3e3e3e" stroke-width="2.4"/><circle cx="11" cy="17" r="1.5" fill="#3e3e3e"/></svg><svg style="position:absolute;left:2784px;top:627.5px;" width="22" height="22" viewBox="0 0 22 22"><g stroke="#c8c8c8" stroke-width="2.2"><path d="M1 7 H21 M1 15 H21"/><path d="M14 2 V11 M8 10 V20"/></g></svg><svg style="position:absolute;left:2826px;top:626.5px;" width="8" height="24" viewBox="0 0 8 24"><circle cx="4" cy="3.5" r="3" fill="#c4c4c4"/><circle cx="4" cy="12" r="3" fill="#c4c4c4"/><circle cx="4" cy="20.5" r="3" fill="#c4c4c4"/></svg><div style="left:2037px;top:658px;width:819px;height:597px;background:#3c3c3c;"></div><svg style="position:absolute;left:2050.0px;top:678.0px;" width="16" height="12" viewBox="0 0 16 12"><polygon points="0,0 16,0 8.0,12" fill="#6e6e6e"/></svg><div class="t" style="left:2075px;top:669.5px;height:29px;line-height:29px;font-size:23px;color:#d2d2d2;font-weight:700;letter-spacing:0.1px;">Materials</div><div style="left:2758px;top:668px;width:88px;height:32px;background:#2a2a2a;border-radius:5px;border:1px solid #222;"></div><div class="t" style="left:2765px;top:669.5px;height:29px;line-height:29px;font-size:23px;color:#d0d0d0;font-weight:400;letter-spacing:0.2px;">1</div><div style="left:2072px;top:707px;width:774px;height:50px;background:#3f3f3f;border-radius:6px;border:1px solid #2a2a2a;"></div><svg style="position:absolute;left:2081px;top:724px;" width="22" height="14" viewBox="0 0 22 14"><rect x="1" y="3" width="20" height="2" fill="#6a6a6a"/><rect x="1" y="9" width="20" height="2" fill="#6a6a6a"/></svg><div class="t" style="left:2128px;top:716.5px;height:29px;line-height:29px;font-size:23px;color:#c4c4c4;font-weight:400;letter-spacing:0.25px;">Element 0</div><div style="left:2383px;top:715px;width:451px;height:32px;background:#2a2a2a;border-radius:5px;border:1px solid #222;"></div><div style="left:2798px;top:716px;width:35px;height:30px;background:#2f2f2f;border-radius:0 5px 5px 0;"></div><svg style="position:absolute;left:2389px;top:720px;" width="22" height="22" viewBox="0 0 22 22"><circle cx="11" cy="11" r="9.5" fill="#62c4f0"/><path d="M10.5 4 A7 7 0 0 1 18 11.5" stroke="#2a2a2a" stroke-width="2.6" fill="none"/></svg><div class="t" style="left:2413px;top:716.5px;height:29px;line-height:29px;font-size:23px;color:#d0d0d0;font-weight:400;letter-spacing:0.25px;">Green</div><svg style="position:absolute;left:2804px;top:720px;" width="22" height="22" viewBox="0 0 22 22"><circle cx="11" cy="11" r="9" fill="none" stroke="#c4c4c4" stroke-width="2"/><circle cx="11" cy="11" r="3.5" fill="#c4c4c4"/></svg><div style="left:2721px;top:756px;width:106px;height:36px;background:#3c3c3c;border-radius:0 0 6px 6px;border:1px solid #2a2a2a;border-top:none;"></div><svg style="position:absolute;left:2740px;top:763px;" width="22" height="22" viewBox="0 0 22 22"><path d="M11 2 V20 M2 11 H20" stroke="#d0d0d0" stroke-width="3"/></svg><svg style="position:absolute;left:2787px;top:763px;" width="20" height="22" viewBox="0 0 20 22"><path d="M2 11 H18" stroke="#d0d0d0" stroke-width="3"/></svg><svg style="position:absolute;left:2050.0px;top:809.5px;" width="16" height="12" viewBox="0 0 16 12"><polygon points="0,0 16,0 8.0,12" fill="#6e6e6e"/></svg><div class="t" style="left:2075px;top:801.0px;height:29px;line-height:29px;font-size:23px;color:#d2d2d2;font-weight:700;letter-spacing:0.1px;">Lighting</div><div class="t" style="left:2101px;top:838.0px;height:29px;line-height:29px;font-size:23px;color:#c4c4c4;font-weight:400;letter-spacing:0.25px;">Cast Shadows</div><div style="left:2381px;top:837.5px;width:465px;height:30.0px;background:#515151;border-radius:5px;border:1px solid #2e2e2e;"></div><div class="t" style="left:2388px;top:838.0px;height:29px;line-height:29px;font-size:23px;color:#d0d0d0;font-weight:400;letter-spacing:0.25px;">On</div><svg style="position:absolute;left:2821.0px;top:848.5px;" width="14" height="8" viewBox="0 0 14 8"><polygon points="0,0 14,0 7.0,8" fill="#c4c4c4"/></svg><div class="t" style="left:2101px;top:875.5px;height:29px;line-height:29px;font-size:23px;color:#c4c4c4;font-weight:400;letter-spacing:0.25px;">Static Shadow Caster</div><div style="left:2380px;top:877px;width:25px;height:26px;background:#2a2a2a;border-radius:4px;border:1px solid #1f1f1f;"></div><div style="left:2101px;top:912px;width:272px;height:32px;overflow:hidden;"><div class="t" style="left:0px;top:1.5px;height:29px;line-height:29px;font-size:23px;color:#c4c4c4;font-weight:400;letter-spacing:0.25px;">Contribute Global Illumination</div></div><div style="left:2380px;top:914.5px;width:25px;height:26.0px;background:#2a2a2a;border-radius:4px;border:1px solid #1f1f1f;"></div><div style="left:2101px;top:950px;width:272px;height:32px;overflow:hidden;"><div class="t" style="left:0px;top:1.5px;height:29px;line-height:29px;font-size:23px;color:#7c7c7c;font-weight:400;letter-spacing:0.25px;">Receive Global Illumination</div></div><div style="left:2381px;top:950.5px;width:465px;height:30.0px;background:#4a4a4a;border-radius:5px;border:1px solid #2e2e2e;opacity:0.75;"></div><div class="t" style="left:2388px;top:951.0px;height:29px;line-height:29px;font-size:23px;color:#8a8a8a;font-weight:400;letter-spacing:0.25px;">Light Probes</div><svg style="position:absolute;left:2821.0px;top:961.5px;" width="14" height="8" viewBox="0 0 14 8"><polygon points="0,0 14,0 7.0,8" fill="#7a7a7a"/></svg><svg style="position:absolute;left:2050.0px;top:997.0px;" width="16" height="12" viewBox="0 0 16 12"><polygon points="0,0 16,0 8.0,12" fill="#6e6e6e"/></svg><div class="t" style="left:2075px;top:988.5px;height:29px;line-height:29px;font-size:23px;color:#d2d2d2;font-weight:700;letter-spacing:0.1px;">Probes</div><div class="t" style="left:2101px;top:1025.5px;height:29px;line-height:29px;font-size:23px;color:#c4c4c4;font-weight:400;letter-spacing:0.25px;">Light Probes</div><div style="left:2381px;top:1025px;width:465px;height:30px;background:#515151;border-radius:5px;border:1px solid #2e2e2e;"></div><div class="t" style="left:2388px;top:1025.5px;height:29px;line-height:29px;font-size:23px;color:#d0d0d0;font-weight:400;letter-spacing:0.25px;">Blend Probes</div><svg style="position:absolute;left:2821.0px;top:1036.0px;" width="14" height="8" viewBox="0 0 14 8"><polygon points="0,0 14,0 7.0,8" fill="#c4c4c4"/></svg><div class="t" style="left:2101px;top:1063.5px;height:29px;line-height:29px;font-size:23px;color:#c4c4c4;font-weight:400;letter-spacing:0.25px;">Anchor Override</div><div style="left:2381px;top:1062px;width:467px;height:32px;background:#2a2a2a;border-radius:5px;border:1px solid #222;"></div><div style="left:2812px;top:1063px;width:35px;height:30px;background:#2f2f2f;border-radius:0 5px 5px 0;"></div><div class="t" style="left:2386px;top:1063.5px;height:29px;line-height:29px;font-size:23px;color:#a8a8a8;font-weight:400;letter-spacing:0.25px;">None (Transform)</div><svg style="position:absolute;left:2818px;top:1067px;" width="22" height="22" viewBox="0 0 22 22"><circle cx="11" cy="11" r="9" fill="none" stroke="#c4c4c4" stroke-width="2"/><circle cx="11" cy="11" r="3.5" fill="#c4c4c4"/></svg><svg style="position:absolute;left:2050.0px;top:1109.5px;" width="16" height="12" viewBox="0 0 16 12"><polygon points="0,0 16,0 8.0,12" fill="#6e6e6e"/></svg><div class="t" style="left:2075px;top:1101.0px;height:29px;line-height:29px;font-size:23px;color:#d2d2d2;font-weight:700;letter-spacing:0.1px;">Additional Settings</div><div class="t" style="left:2101px;top:1138.0px;height:29px;line-height:29px;font-size:23px;color:#c4c4c4;font-weight:400;letter-spacing:0.25px;">Motion Vectors</div><div style="left:2381px;top:1137.5px;width:465px;height:30.0px;background:#515151;border-radius:5px;border:1px solid #2e2e2e;"></div><div class="t" style="left:2388px;top:1138.0px;height:29px;line-height:29px;font-size:23px;color:#d0d0d0;font-weight:400;letter-spacing:0.25px;">Per Object Motion</div><svg style="position:absolute;left:2821.0px;top:1148.5px;" width="14" height="8" viewBox="0 0 14 8"><polygon points="0,0 14,0 7.0,8" fill="#c4c4c4"/></svg><div class="t" style="left:2101px;top:1175.5px;height:29px;line-height:29px;font-size:23px;color:#c4c4c4;font-weight:400;letter-spacing:0.25px;">Dynamic Occlusion</div><div style="left:2380px;top:1177px;width:25px;height:26px;background:#2a2a2a;border-radius:4px;border:1px solid #1f1f1f;"></div><svg style="position:absolute;left:2383.5px;top:1181px;" width="18" height="18" viewBox="0 0 18 18"><path d="M3 9.5 L7.5 14 L15 4" fill="none" stroke="#e6e6e6" stroke-width="2.4"/></svg><div class="t" style="left:2101px;top:1213.5px;height:29px;line-height:29px;font-size:23px;color:#c4c4c4;font-weight:400;letter-spacing:0.25px;">Rendering Layer Mask</div><div style="left:2381px;top:1213px;width:465px;height:30px;background:#515151;border-radius:5px;border:1px solid #2e2e2e;"></div><div class="t" style="left:2388px;top:1213.5px;height:29px;line-height:29px;font-size:23px;color:#d0d0d0;font-weight:400;letter-spacing:0.25px;">Default</div><svg style="position:absolute;left:2821.0px;top:1224.0px;" width="14" height="8" viewBox="0 0 14 8"><polygon points="0,0 14,0 7.0,8" fill="#c4c4c4"/></svg><div style="left:2856px;top:229px;width:22px;height:1026px;background:#3a3a3a;"></div><svg style="position:absolute;left:2859.0px;top:238.0px;" width="14" height="8" viewBox="0 0 14 8"><polygon points="0,8 14,8 7.0,0" fill="#c4c4c4"/></svg><div style="left:2859px;top:263px;width:18px;height:580px;background:#5e5e5e;border-radius:9px;"></div><svg style="position:absolute;left:2859.0px;top:1237.0px;" width="14" height="8" viewBox="0 0 14 8"><polygon points="0,0 14,0 7.0,8" fill="#c4c4c4"/></svg><div style="left:2037px;top:1254px;width:841px;height:2px;background:#242424;"></div><div class="t" style="left:2045px;top:1264.5px;height:29px;line-height:29px;font-size:23px;color:#d2d2d2;font-weight:700;letter-spacing:0.1px;">Asset Labels</div><div style="left:2037px;top:1303px;width:841px;height:2px;background:#242424;"></div><div style="left:2475px;top:269px;width:389px;height:81px;background:transparent;border:7.5px solid #ff0000;"></div><svg style="position:absolute;left:14px;top:1019px;" width="20" height="18" viewBox="0 0 20 18"><g fill="#c8c8c8"><circle cx="2.5" cy="2.5" r="2"/><circle cx="5.5" cy="9" r="2"/><circle cx="5.5" cy="15.5" r="2"/><rect x="7" y="1.5" width="13" height="2"/><rect x="10" y="8" width="10" height="2"/><rect x="10" y="14.5" width="10" height="2"/></g></svg><div class="t" style="left:44px;top:1014.5px;height:29px;line-height:29px;font-size:23px;color:#d0d0d0;font-weight:400;letter-spacing:0.25px;">Hierarchy</div><svg style="position:absolute;left:216px;top:1013px;" width="32" height="32" viewBox="0 0 32 32"><g fill="#c4c4c4"><polygon points="16,1 22.5,4.7 22.5,12.2 16,16 9.5,12.2 9.5,4.7"/><polygon points="9,14 15.5,17.7 15.5,25.2 9,29 2.5,25.2 2.5,17.7"/><polygon points="23,14 29.5,17.7 29.5,25.2 23,29 16.5,25.2 16.5,17.7"/></g></svg><div class="t" style="left:255px;top:1014.5px;height:29px;line-height:29px;font-size:23px;color:#d0d0d0;font-weight:400;letter-spacing:0.25px;">Entities Hierarchy</div><svg style="position:absolute;left:598px;top:1018px;" width="18" height="22" viewBox="0 0 18 22"><rect x="1.5" y="12" width="15" height="8.5" fill="none" stroke="#c4c4c4" stroke-width="2.2"/><path d="M4.5 12 V7 A4.5 4.5 0 0 1 13.5 7" fill="none" stroke="#c4c4c4" stroke-width="2.2"/></svg><svg style="position:absolute;left:636px;top:1017px;" width="8" height="24" viewBox="0 0 8 24"><circle cx="4" cy="3.5" r="3" fill="#c4c4c4"/><circle cx="4" cy="12" r="3" fill="#c4c4c4"/><circle cx="4" cy="20.5" r="3" fill="#c4c4c4"/></svg><div style="left:0px;top:1087px;width:57px;height:493px;background:#333333;"></div><div style="left:57px;top:1087px;width:581px;height:12px;background:#313131;"></div><svg style="position:absolute;left:113px;top:1076px;" width="24" height="26" viewBox="0 0 24 26"><path d="M12 1 V18 M4 11 L12 19 L20 11" fill="none" stroke="#e0e0e0" stroke-width="3.4"/><path d="M2 23 H22" stroke="#e0e0e0" stroke-width="3"/></svg><div style="left:608px;top:1078px;width:26px;height:20px;background:#2a2a2a;border-radius:4px;"></div><div class="t" style="left:143px;top:1071.5px;height:29px;line-height:29px;font-size:23px;color:#c4c4c4;font-weight:400;letter-spacing:0.25px;clip-path:inset(0 0 0 0);">New Sub Scene</div><div style="left:0px;top:1049px;width:664px;height:38px;background:#3c3c3c;"></div><div style="left:0px;top:1087px;width:664px;height:1px;background:#262626;"></div><svg style="position:absolute;left:9px;top:1055px;" width="26" height="26" viewBox="0 0 26 26"><path d="M13 2 V24 M2 13 H24" stroke="#d0d0d0" stroke-width="3.4"/></svg><svg style="position:absolute;left:40.0px;top:1065.0px;" width="14" height="8" viewBox="0 0 14 8"><polygon points="0,0 14,0 7.0,8" fill="#c4c4c4"/></svg><div style="left:78px;top:1054px;width:580px;height:29px;background:#2a2a2a;border-radius:7px;border:1px solid #222;"></div><svg style="position:absolute;left:86px;top:1061px;" width="20" height="16" viewBox="0 0 20 16"><circle cx="6" cy="6" r="4.3" fill="none" stroke="#bcbcbc" stroke-width="2"/><path d="M9 9 L13 13" stroke="#bcbcbc" stroke-width="2.4"/><polygon points="14,4 20,4 17,8" fill="#bcbcbc"/></svg><div class="t" style="left:113px;top:1054.5px;height:29px;line-height:29px;font-size:23px;color:#7a7a7a;font-weight:400;letter-spacing:0.25px;">All</div><div style="left:627px;top:1055px;width:30px;height:27px;background:#303030;border-radius:0 6px 6px 0;"></div><svg style="position:absolute;left:631px;top:1058px;" width="24" height="22" viewBox="0 0 24 22"><g fill="none" stroke="#c4c4c4" stroke-width="1.8"><rect x="5" y="1.5" width="17" height="15"/><rect x="1.5" y="13" width="8" height="8"/><path d="M10 12 L17 5 M12 5 H17 V10"/></g></svg><div style="left:0px;top:1401px;width:638px;height:30px;background:#4d4d4d;"></div><div style="left:0px;top:1401px;width:57px;height:30px;background:#454545;"></div><svg style="position:absolute;left:87.0px;top:1109.6px;" width="17" height="12" viewBox="0 0 17 12"><polygon points="0,0 17,0 8.5,12" fill="#6e6e6e"/></svg><svg style="position:absolute;left:110px;top:1102.6px;" width="27" height="27" viewBox="0 0 27 27"><g fill="none" stroke="#c8c8c8" stroke-width="2" stroke-linejoin="round"><path d="M13.5 2 L24.5 7.5 V19.5 L13.5 25 L2.5 19.5 V7.5 Z M2.5 7.5 L13.5 13 L24.5 7.5 M13.5 13 V25"/></g></svg><div class="t" style="left:143px;top:1101.1px;height:29px;line-height:29px;font-size:23px;color:#d0d0d0;font-weight:400;letter-spacing:0.25px;">Canvas</div><svg style="position:absolute;left:117.0px;top:1137.6499999999999px;" width="12" height="16" viewBox="0 0 12 16"><polygon points="0,0 12,8.0 0,16" fill="#6e6e6e"/></svg><svg style="position:absolute;left:137px;top:1132.6499999999999px;" width="27" height="27" viewBox="0 0 27 27"><g fill="none" stroke="#8a8a8a" stroke-width="2" stroke-linejoin="round"><path d="M13.5 2 L24.5 7.5 V19.5 L13.5 25 L2.5 19.5 V7.5 Z M2.5 7.5 L13.5 13 L24.5 7.5 M13.5 13 V25"/></g></svg><div class="t" style="left:170px;top:1131.1px;height:29px;line-height:29px;font-size:23px;color:#808080;font-weight:400;letter-spacing:0.25px;">GameOverPanel</div><svg style="position:absolute;left:117.0px;top:1167.6999999999998px;" width="12" height="16" viewBox="0 0 12 16"><polygon points="0,0 12,8.0 0,16" fill="#6e6e6e"/></svg><svg style="position:absolute;left:137px;top:1162.6999999999998px;" width="27" height="27" viewBox="0 0 27 27"><g fill="none" stroke="#8a8a8a" stroke-width="2" stroke-linejoin="round"><path d="M13.5 2 L24.5 7.5 V19.5 L13.5 25 L2.5 19.5 V7.5 Z M2.5 7.5 L13.5 13 L24.5 7.5 M13.5 13 V25"/></g></svg><div class="t" style="left:170px;top:1161.2px;height:29px;line-height:29px;font-size:23px;color:#808080;font-weight:400;letter-spacing:0.25px;">GameVictoryPanel</div><svg style="position:absolute;left:137px;top:1192.75px;" width="27" height="27" viewBox="0 0 27 27"><g fill="none" stroke="#c8c8c8" stroke-width="2" stroke-linejoin="round"><path d="M13.5 2 L24.5 7.5 V19.5 L13.5 25 L2.5 19.5 V7.5 Z M2.5 7.5 L13.5 13 L24.5 7.5 M13.5 13 V25"/></g></svg><div class="t" style="left:170px;top:1191.2px;height:29px;line-height:29px;font-size:23px;color:#d0d0d0;font-weight:400;letter-spacing:0.25px;">MinmapBorder</div><svg style="position:absolute;left:137px;top:1222.8px;" width="27" height="27" viewBox="0 0 27 27"><g fill="none" stroke="#c8c8c8" stroke-width="2" stroke-linejoin="round"><path d="M13.5 2 L24.5 7.5 V19.5 L13.5 25 L2.5 19.5 V7.5 Z M2.5 7.5 L13.5 13 L24.5 7.5 M13.5 13 V25"/></g></svg><div class="t" style="left:170px;top:1221.3px;height:29px;line-height:29px;font-size:23px;color:#d0d0d0;font-weight:400;letter-spacing:0.25px;">MinimapRenderTexture</div><svg style="position:absolute;left:110px;top:1252.85px;" width="27" height="27" viewBox="0 0 27 27"><g fill="none" stroke="#c8c8c8" stroke-width="2" stroke-linejoin="round"><path d="M13.5 2 L24.5 7.5 V19.5 L13.5 25 L2.5 19.5 V7.5 Z M2.5 7.5 L13.5 13 L24.5 7.5 M13.5 13 V25"/></g></svg><div class="t" style="left:143px;top:1251.3px;height:29px;line-height:29px;font-size:23px;color:#d0d0d0;font-weight:400;letter-spacing:0.25px;">EventSystem</div><svg style="position:absolute;left:110px;top:1282.8999999999999px;" width="27" height="27" viewBox="0 0 27 27"><g fill="none" stroke="#c8c8c8" stroke-width="2" stroke-linejoin="round"><path d="M13.5 2 L24.5 7.5 V19.5 L13.5 25 L2.5 19.5 V7.5 Z M2.5 7.5 L13.5 13 L24.5 7.5 M13.5 13 V25"/></g></svg><div class="t" style="left:143px;top:1281.4px;height:29px;line-height:29px;font-size:23px;color:#d0d0d0;font-weight:400;letter-spacing:0.25px;">GamePlayUIPresenter</div><svg style="position:absolute;left:90.0px;top:1317.9499999999998px;" width="12" height="16" viewBox="0 0 12 16"><polygon points="0,0 12,8.0 0,16" fill="#6e6e6e"/></svg><svg style="position:absolute;left:110px;top:1312.9499999999998px;" width="27" height="27" viewBox="0 0 27 27"><polygon points="13.5,1.5 25,7.5 13.5,13.5 2,7.5" fill="#78b4d2"/><polygon points="2,9 12.5,14.5 12.5,26 2,20.5" fill="#5e9ec0"/><polygon points="25,9 14.5,14.5 14.5,26 25,20.5" fill="#5e9ec0"/></svg><div class="t" style="left:143px;top:1311.4px;height:29px;line-height:29px;font-size:23px;color:#4e74ab;font-weight:400;letter-spacing:0.25px;">LevelJungle</div><div style="left:57px;top:1312px;width:3px;height:28px;background:#2f8fd8;"></div><svg style="position:absolute;left:618px;top:1316.9499999999998px;" width="12" height="18" viewBox="0 0 12 18"><path d="M2 2 L9 9 L2 16" fill="none" stroke="#a0a0a0" stroke-width="2.2"/></svg><svg style="position:absolute;left:90.0px;top:1348.0px;" width="12" height="16" viewBox="0 0 12 16"><polygon points="0,0 12,8.0 0,16" fill="#6e6e6e"/></svg><svg style="position:absolute;left:110px;top:1343.0px;" width="27" height="27" viewBox="0 0 27 27"><polygon points="13.5,1.5 25,7.5 13.5,13.5 2,7.5" fill="#78b4d2"/><polygon points="2,9 12.5,14.5 12.5,26 2,20.5" fill="#5e9ec0"/><polygon points="25,9 14.5,14.5 14.5,26 25,20.5" fill="#5e9ec0"/></svg><div class="t" style="left:143px;top:1341.5px;height:29px;line-height:29px;font-size:23px;color:#4e74ab;font-weight:400;letter-spacing:0.25px;">TankShark</div><div style="left:57px;top:1342px;width:3px;height:28px;background:#2f8fd8;"></div><svg style="position:absolute;left:618px;top:1347.0px;" width="12" height="18" viewBox="0 0 12 18"><path d="M2 2 L9 9 L2 16" fill="none" stroke="#a0a0a0" stroke-width="2.2"/></svg><svg style="position:absolute;left:584px;top:1342px;" width="22" height="26" viewBox="0 0 22 26"><path d="M2 25 V11 A9 9 0 0 1 20 11 V25" fill="none" stroke="#e07ee0" stroke-width="2"/><circle cx="11" cy="10" r="2.2" fill="#e07ee0"/><path d="M6 16 Q11 21 16 16" fill="none" stroke="#e07ee0" stroke-width="2"/></svg><svg style="position:absolute;left:87.0px;top:1380.05px;" width="17" height="12" viewBox="0 0 17 12"><polygon points="0,0 17,0 8.5,12" fill="#6e6e6e"/></svg><svg style="position:absolute;left:110px;top:1373.05px;" width="27" height="27" viewBox="0 0 27 27"><polygon points="13.5,1.5 25,7.5 13.5,13.5 2,7.5" fill="#78b4d2"/><polygon points="2,9 12.5,14.5 12.5,26 2,20.5" fill="#5e9ec0"/><polygon points="25,9 14.5,14.5 14.5,26 25,20.5" fill="#5e9ec0"/></svg><div class="t" style="left:143px;top:1371.5px;height:29px;line-height:29px;font-size:23px;color:#4e74ab;font-weight:400;letter-spacing:0.25px;">TankRenderers</div><div style="left:57px;top:1372px;width:3px;height:28px;background:#2f8fd8;"></div><svg style="position:absolute;left:618px;top:1377.05px;" width="12" height="18" viewBox="0 0 12 18"><path d="M2 2 L9 9 L2 16" fill="none" stroke="#a0a0a0" stroke-width="2.2"/></svg><svg style="position:absolute;left:137px;top:1403.1px;" width="27" height="27" viewBox="0 0 27 27"><g fill="none" stroke="#8f8f8f" stroke-width="2" stroke-linejoin="round"><path d="M13.5 2 L24.5 7.5 V19.5 L13.5 25 L2.5 19.5 V7.5 Z M2.5 7.5 L13.5 13 L24.5 7.5 M13.5 13 V25"/></g></svg><div class="t" style="left:170px;top:1401.6px;height:29px;line-height:29px;font-size:23px;color:#a2b1cc;font-weight:400;letter-spacing:0.25px;">MinimapIcon</div><svg style="position:absolute;left:137px;top:1433.1499999999999px;" width="27" height="27" viewBox="0 0 27 27"><g fill="none" stroke="#8f8f8f" stroke-width="2" stroke-linejoin="round"><path d="M13.5 2 L24.5 7.5 V19.5 L13.5 25 L2.5 19.5 V7.5 Z M2.5 7.5 L13.5 13 L24.5 7.5 M13.5 13 V25"/></g></svg><div class="t" style="left:170px;top:1431.6px;height:29px;line-height:29px;font-size:23px;color:#4e74ab;font-weight:400;letter-spacing:0.25px;">TankChassis</div><svg style="position:absolute;left:137px;top:1463.1999999999998px;" width="27" height="27" viewBox="0 0 27 27"><g fill="none" stroke="#8f8f8f" stroke-width="2" stroke-linejoin="round"><path d="M13.5 2 L24.5 7.5 V19.5 L13.5 25 L2.5 19.5 V7.5 Z M2.5 7.5 L13.5 13 L24.5 7.5 M13.5 13 V25"/></g></svg><div class="t" style="left:170px;top:1461.7px;height:29px;line-height:29px;font-size:23px;color:#4e74ab;font-weight:400;letter-spacing:0.25px;">TankTracksLeft</div><svg style="position:absolute;left:137px;top:1493.25px;" width="27" height="27" viewBox="0 0 27 27"><g fill="none" stroke="#8f8f8f" stroke-width="2" stroke-linejoin="round"><path d="M13.5 2 L24.5 7.5 V19.5 L13.5 25 L2.5 19.5 V7.5 Z M2.5 7.5 L13.5 13 L24.5 7.5 M13.5 13 V25"/></g></svg><div class="t" style="left:170px;top:1491.8px;height:29px;line-height:29px;font-size:23px;color:#4e74ab;font-weight:400;letter-spacing:0.25px;">TankTracksRight</div><svg style="position:absolute;left:137px;top:1523.3px;" width="27" height="27" viewBox="0 0 27 27"><g fill="none" stroke="#8f8f8f" stroke-width="2" stroke-linejoin="round"><path d="M13.5 2 L24.5 7.5 V19.5 L13.5 25 L2.5 19.5 V7.5 Z M2.5 7.5 L13.5 13 L24.5 7.5 M13.5 13 V25"/></g></svg><div class="t" style="left:170px;top:1521.8px;height:29px;line-height:29px;font-size:23px;color:#4e74ab;font-weight:400;letter-spacing:0.25px;">TankTurret</div><svg style="position:absolute;left:90.0px;top:1558.35px;" width="12" height="16" viewBox="0 0 12 16"><polygon points="0,0 12,8.0 0,16" fill="#6e6e6e"/></svg><svg style="position:absolute;left:110px;top:1553.35px;" width="27" height="27" viewBox="0 0 27 27"><polygon points="13.5,1.5 25,7.5 13.5,13.5 2,7.5" fill="#78b4d2"/><polygon points="2,9 12.5,14.5 12.5,26 2,20.5" fill="#5e9ec0"/><polygon points="25,9 14.5,14.5 14.5,26 25,20.5" fill="#5e9ec0"/></svg><div class="t" style="left:143px;top:1551.8px;height:29px;line-height:29px;font-size:23px;color:#4e74ab;font-weight:400;letter-spacing:0.25px;">TankSharkRenderers</div><div style="left:57px;top:1552px;width:3px;height:28px;background:#2f8fd8;"></div><svg style="position:absolute;left:618px;top:1557.35px;" width="12" height="18" viewBox="0 0 12 18"><path d="M2 2 L9 9 L2 16" fill="none" stroke="#a0a0a0" stroke-width="2.2"/></svg><div style="left:638px;top:1087px;width:26px;height:493px;background:#383838;"></div><svg style="position:absolute;left:645.0px;top:1100.0px;" width="14" height="8" viewBox="0 0 14 8"><polygon points="0,8 14,8 7.0,0" fill="#c4c4c4"/></svg><div style="left:642px;top:1220px;width:18px;height:331px;background:#5e5e5e;border-radius:9px;"></div><svg style="position:absolute;left:645.0px;top:1562.0px;" width="14" height="8" viewBox="0 0 14 8"><polygon points="0,0 14,0 7.0,8" fill="#c4c4c4"/></svg><div style="left:664px;top:1001px;width:3px;height:579px;background:#191919;"></div><div style="left:18px;top:1361px;width:618px;height:197px;background:transparent;border:7.5px solid #ff0000;"></div><svg style="position:absolute;left:681px;top:1017px;" width="24" height="22" viewBox="0 0 24 22"><path d="M1 2.5 Q1 1 2.5 1 H9 L11.5 4 H21.5 Q23 4 23 5.5 V20 Q23 21.5 21.5 21.5 H2.5 Q1 21.5 1 20 Z" fill="#c8c8c8"/></svg><div class="t" style="left:716px;top:1014.5px;height:29px;line-height:29px;font-size:23px;color:#d0d0d0;font-weight:400;letter-spacing:0.25px;">Project</div><svg style="position:absolute;left:866px;top:1016px;" width="20" height="22" viewBox="0 0 20 22"><rect x="1" y="1" width="18" height="20" rx="2" fill="#c8c8c8"/><g fill="#1e1e1e"><rect x="4" y="5" width="12" height="2"/><rect x="4" y="9" width="12" height="2"/><rect x="4" y="13" width="12" height="2"/><rect x="4" y="17" width="8" height="1.5"/></g></svg><div class="t" style="left:895px;top:1014.5px;height:29px;line-height:29px;font-size:23px;color:#d0d0d0;font-weight:400;letter-spacing:0.25px;">Console</div><svg style="position:absolute;left:1052px;top:1017px;" width="24" height="24" viewBox="0 0 24 24"><circle cx="12" cy="12" r="11.5" fill="#c8c8c8"/><path d="M10 4 V13.5 H18" fill="none" stroke="#1e1e1e" stroke-width="2"/></svg><div class="t" style="left:1085px;top:1014.5px;height:29px;line-height:29px;font-size:23px;color:#d0d0d0;font-weight:400;letter-spacing:0.25px;">Animation</div><svg style="position:absolute;left:1264px;top:1017px;" width="24" height="20" viewBox="0 0 24 20"><g fill="none" stroke="#c8c8c8" stroke-width="2.4"><path d="M2 4 Q9 4 12 10 Q9 16 2 17 M12 10 H22"/></g><polygon points="17,5 23,10 17,15" fill="#c8c8c8"/></svg><div class="t" style="left:1293px;top:1014.5px;height:29px;line-height:29px;font-size:23px;color:#d0d0d0;font-weight:400;letter-spacing:0.25px;">Animator</div><svg style="position:absolute;left:1462px;top:1012px;" width="30" height="33" viewBox="0 0 30 33"><g fill="none" stroke="#c8c8c8" stroke-width="2.4" stroke-linejoin="round"><path d="M2 21 V9 L15 2 L26 8"/><path d="M28 12 V24 L15 31 L4 25"/></g><polygon points="21,3 29,8.5 22,12" fill="#c8c8c8"/><polygon points="9,30 1,24.5 8,21" fill="#c8c8c8"/></svg><div class="t" style="left:1499px;top:1014.5px;height:29px;line-height:29px;font-size:23px;color:#d0d0d0;font-weight:400;letter-spacing:0.25px;">Systems</div><div class="t" style="left:1656px;top:1014.5px;height:29px;line-height:29px;font-size:23px;color:#d0d0d0;font-weight:400;letter-spacing:0.25px;">PlayMode Tools</div><div style="left:1880px;top:1010px;width:52px;height:40px;overflow:hidden;"><div class="t" style="left:0px;top:4.5px;height:29px;line-height:29px;font-size:23px;color:#d0d0d0;font-weight:400;letter-spacing:0.25px;">Multiplayer</div></div><div style="left:1932px;top:1005px;width:30px;height:43px;background:#2a2a2a;"></div><svg style="position:absolute;left:1943.0px;top:1021.0px;" width="10" height="16" viewBox="0 0 10 16"><polygon points="0,0 10,8.0 0,16" fill="#d0d0d0"/></svg><svg style="position:absolute;left:1969px;top:1018px;" width="18" height="22" viewBox="0 0 18 22"><rect x="1.5" y="12" width="15" height="8.5" fill="none" stroke="#c4c4c4" stroke-width="2.2"/><path d="M4.5 12 V7 A4.5 4.5 0 0 1 13.5 7" fill="none" stroke="#c4c4c4" stroke-width="2.2"/></svg><svg style="position:absolute;left:2006px;top:1017px;" width="8" height="24" viewBox="0 0 8 24"><circle cx="4" cy="3.5" r="3" fill="#c4c4c4"/><circle cx="4" cy="12" r="3" fill="#c4c4c4"/><circle cx="4" cy="20.5" r="3" fill="#c4c4c4"/></svg><svg style="position:absolute;left:679px;top:1056px;" width="26" height="26" viewBox="0 0 26 26"><path d="M13 2 V24 M2 13 H24" stroke="#d0d0d0" stroke-width="3.4"/></svg><svg style="position:absolute;left:710.0px;top:1065.0px;" width="14" height="8" viewBox="0 0 14 8"><polygon points="0,0 14,0 7.0,8" fill="#c4c4c4"/></svg><div style="left:1206px;top:1055px;width:596px;height:28px;background:#2a2a2a;border-radius:7px;border:1px solid #222;"></div><svg style="position:absolute;left:1214px;top:1062px;" width="16" height="16" viewBox="0 0 16 16"><circle cx="6" cy="6" r="4.3" fill="none" stroke="#bcbcbc" stroke-width="2"/><path d="M9 9 L14 14" stroke="#bcbcbc" stroke-width="2.6"/></svg><div style="left:1771px;top:1056px;width:30px;height:26px;background:#303030;border-radius:0 6px 6px 0;"></div><svg style="position:absolute;left:1774px;top:1058px;" width="24" height="22" viewBox="0 0 24 22"><g fill="none" stroke="#c4c4c4" stroke-width="1.8"><rect x="5" y="1.5" width="17" height="15"/><rect x="1.5" y="13" width="8" height="8"/><path d="M10 12 L17 5 M12 5 H17 V10"/></g></svg><div style="left:1806px;top:1050px;width:2px;height:37px;background:#2c2c2c;"></div><div style="left:1855px;top:1050px;width:2px;height:37px;background:#2c2c2c;"></div><div style="left:1904px;top:1050px;width:2px;height:37px;background:#2c2c2c;"></div><div style="left:1953px;top:1050px;width:2px;height:37px;background:#2c2c2c;"></div><svg style="position:absolute;left:1818px;top:1056px;" width="26" height="26" viewBox="0 0 26 26"><rect x="6" y="1" width="9" height="9" fill="#c8c8c8"/><circle cx="8" cy="18" r="7" fill="#c8c8c8"/><polygon points="18,9 25,21 11,21" fill="#c8c8c8"/></svg><svg style="position:absolute;left:1868px;top:1057px;" width="24" height="24" viewBox="0 0 24 24"><path d="M12 2 H22 V12 L11 23 L1 13 Z" fill="#c8c8c8"/><circle cx="17" cy="7" r="2.3" fill="#3c3c3c"/></svg><svg style="position:absolute;left:1916px;top:1056px;" width="26" height="26" viewBox="0 0 26 26"><polygon points="8,1 18,1 25,8 25,18 18,25 8,25 1,18 1,8" fill="#c8c8c8"/><rect x="11.5" y="5" width="3" height="11" fill="#3c3c3c"/><circle cx="13" cy="20" r="2" fill="#3c3c3c"/></svg><svg style="position:absolute;left:1966px;top:1060px;" width="30" height="18" viewBox="0 0 30 18"><path d="M1 9 Q15 -4 29 9 Q15 22 1 9 Z" fill="none" stroke="#7e7e7e" stroke-width="2"/><circle cx="15" cy="9" r="5" fill="#7e7e7e"/></svg><div class="t" style="left:1997px;top:1054.5px;height:29px;line-height:29px;font-size:23px;color:#c4c4c4;font-weight:400;letter-spacing:0.5px;">38</div><svg style="position:absolute;left:674.0px;top:1104.5px;" width="17" height="12" viewBox="0 0 17 12"><polygon points="0,0 17,0 8.5,12" fill="#6e6e6e"/></svg><svg style="position:absolute;left:699px;top:1099.5px;" width="30" height="24" viewBox="0 0 30 24"><path d="M1.5 21.5 V3 Q1.5 1.5 3 1.5 H9.5 L12 4.5 H23 Q24.5 4.5 24.5 6 V9" fill="none" stroke="#c8c8c8" stroke-width="2.4"/><path d="M2 22.5 L7 10 H29 L24 22.5 Z" fill="#c8c8c8"/></svg><div class="t" style="left:733px;top:1096.0px;height:29px;line-height:29px;font-size:23px;color:#dcdcdc;font-weight:700;letter-spacing:0.45px;">Assets</div><svg style="position:absolute;left:704.0px;top:1132.55px;" width="12" height="16" viewBox="0 0 12 16"><polygon points="0,0 12,8.0 0,16" fill="#6e6e6e"/></svg><svg style="position:absolute;left:727px;top:1130.55px;" width="24" height="20" viewBox="0 0 24 20"><path d="M1 2.5 Q1 1 2.5 1 H8.5 L11 3.5 H21.5 Q23 3.5 23 5 V18 Q23 19.5 21.5 19.5 H2.5 Q1 19.5 1 18 Z" fill="#c8c8c8"/></svg><div class="t" style="left:757px;top:1126.0px;height:29px;line-height:29px;font-size:23px;color:#d0d0d0;font-weight:400;letter-spacing:0.25px;">Art</div><svg style="position:absolute;left:704.0px;top:1162.6px;" width="12" height="16" viewBox="0 0 12 16"><polygon points="0,0 12,8.0 0,16" fill="#6e6e6e"/></svg><svg style="position:absolute;left:727px;top:1160.6px;" width="24" height="20" viewBox="0 0 24 20"><path d="M1 2.5 Q1 1 2.5 1 H8.5 L11 3.5 H21.5 Q23 3.5 23 5 V18 Q23 19.5 21.5 19.5 H2.5 Q1 19.5 1 18 Z" fill="#c8c8c8"/></svg><div class="t" style="left:757px;top:1156.1px;height:29px;line-height:29px;font-size:23px;color:#d0d0d0;font-weight:400;letter-spacing:0.25px;">Audio</div><svg style="position:absolute;left:704.0px;top:1192.65px;" width="12" height="16" viewBox="0 0 12 16"><polygon points="0,0 12,8.0 0,16" fill="#6e6e6e"/></svg><svg style="position:absolute;left:727px;top:1190.65px;" width="24" height="20" viewBox="0 0 24 20"><path d="M1 2.5 Q1 1 2.5 1 H8.5 L11 3.5 H21.5 Q23 3.5 23 5 V18 Q23 19.5 21.5 19.5 H2.5 Q1 19.5 1 18 Z" fill="#c8c8c8"/></svg><div class="t" style="left:757px;top:1186.2px;height:29px;line-height:29px;font-size:23px;color:#d0d0d0;font-weight:400;letter-spacing:0.25px;">GlobalEntitiesDependencies</div><svg style="position:absolute;left:704.0px;top:1222.7px;" width="12" height="16" viewBox="0 0 12 16"><polygon points="0,0 12,8.0 0,16" fill="#6e6e6e"/></svg><svg style="position:absolute;left:727px;top:1220.7px;" width="24" height="20" viewBox="0 0 24 20"><path d="M1 2.5 Q1 1 2.5 1 H8.5 L11 3.5 H21.5 Q23 3.5 23 5 V18 Q23 19.5 21.5 19.5 H2.5 Q1 19.5 1 18 Z" fill="#c8c8c8"/></svg><div class="t" style="left:757px;top:1216.2px;height:29px;line-height:29px;font-size:23px;color:#d0d0d0;font-weight:400;letter-spacing:0.25px;">Materials</div><svg style="position:absolute;left:704.0px;top:1252.75px;" width="12" height="16" viewBox="0 0 12 16"><polygon points="0,0 12,8.0 0,16" fill="#6e6e6e"/></svg><svg style="position:absolute;left:727px;top:1250.75px;" width="24" height="20" viewBox="0 0 24 20"><path d="M1 2.5 Q1 1 2.5 1 H8.5 L11 3.5 H21.5 Q23 3.5 23 5 V18 Q23 19.5 21.5 19.5 H2.5 Q1 19.5 1 18 Z" fill="#c8c8c8"/></svg><div class="t" style="left:757px;top:1246.2px;height:29px;line-height:29px;font-size:23px;color:#d0d0d0;font-weight:400;letter-spacing:0.25px;">Models</div><svg style="position:absolute;left:704.0px;top:1282.8px;" width="12" height="16" viewBox="0 0 12 16"><polygon points="0,0 12,8.0 0,16" fill="#6e6e6e"/></svg><svg style="position:absolute;left:727px;top:1280.8px;" width="24" height="20" viewBox="0 0 24 20"><path d="M1 2.5 Q1 1 2.5 1 H8.5 L11 3.5 H21.5 Q23 3.5 23 5 V18 Q23 19.5 21.5 19.5 H2.5 Q1 19.5 1 18 Z" fill="#c8c8c8"/></svg><div class="t" style="left:757px;top:1276.3px;height:29px;line-height:29px;font-size:23px;color:#d0d0d0;font-weight:400;letter-spacing:0.25px;">Prefabs</div><svg style="position:absolute;left:701.0px;top:1314.85px;" width="17" height="12" viewBox="0 0 17 12"><polygon points="0,0 17,0 8.5,12" fill="#6e6e6e"/></svg><svg style="position:absolute;left:726px;top:1309.85px;" width="30" height="24" viewBox="0 0 30 24"><path d="M1.5 21.5 V3 Q1.5 1.5 3 1.5 H9.5 L12 4.5 H23 Q24.5 4.5 24.5 6 V9" fill="none" stroke="#c8c8c8" stroke-width="2.4"/><path d="M2 22.5 L7 10 H29 L24 22.5 Z" fill="#c8c8c8"/></svg><div class="t" style="left:757px;top:1306.3px;height:29px;line-height:29px;font-size:23px;color:#d0d0d0;font-weight:400;letter-spacing:0.25px;">Resources</div><svg style="position:absolute;left:728.0px;top:1344.9px;" width="17" height="12" viewBox="0 0 17 12"><polygon points="0,0 17,0 8.5,12" fill="#6e6e6e"/></svg><svg style="position:absolute;left:753px;top:1339.9px;" width="30" height="24" viewBox="0 0 30 24"><path d="M1.5 21.5 V3 Q1.5 1.5 3 1.5 H9.5 L12 4.5 H23 Q24.5 4.5 24.5 6 V9" fill="none" stroke="#c8c8c8" stroke-width="2.4"/><path d="M2 22.5 L7 10 H29 L24 22.5 Z" fill="#c8c8c8"/></svg><div class="t" style="left:784px;top:1336.4px;height:29px;line-height:29px;font-size:23px;color:#d0d0d0;font-weight:400;letter-spacing:0.25px;">Textures</div><svg style="position:absolute;left:779px;top:1368.95px;" width="26" height="26" viewBox="0 0 26 26"><rect x="1.5" y="1.5" width="21" height="21" fill="none" stroke="#55c7f2" stroke-width="2"/><g fill="#d0d0d0"><rect x="5" y="5" width="3.5" height="3.5"/><rect x="12" y="5" width="3.5" height="3.5"/><rect x="8.5" y="8.5" width="3.5" height="3.5"/><rect x="15.5" y="8.5" width="3.5" height="3.5"/></g><path d="M6 19 Q14 10 23 19 Q14 27 6 19 Z" fill="#d0d0d0"/><circle cx="14.5" cy="19" r="2.8" fill="#383838"/></svg><div class="t" style="left:808px;top:1366.5px;height:29px;line-height:29px;font-size:23px;color:#d0d0d0;font-weight:400;letter-spacing:0.25px;">MinimapRenderTexture</div><svg style="position:absolute;left:704.0px;top:1403.0px;" width="12" height="16" viewBox="0 0 12 16"><polygon points="0,0 12,8.0 0,16" fill="#6e6e6e"/></svg><svg style="position:absolute;left:727px;top:1401.0px;" width="24" height="20" viewBox="0 0 24 20"><path d="M1 2.5 Q1 1 2.5 1 H8.5 L11 3.5 H21.5 Q23 3.5 23 5 V18 Q23 19.5 21.5 19.5 H2.5 Q1 19.5 1 18 Z" fill="#c8c8c8"/></svg><div class="t" style="left:757px;top:1396.5px;height:29px;line-height:29px;font-size:23px;color:#d0d0d0;font-weight:400;letter-spacing:0.25px;">SceneDependencyCache</div><svg style="position:absolute;left:701.0px;top:1435.05px;" width="17" height="12" viewBox="0 0 17 12"><polygon points="0,0 17,0 8.5,12" fill="#6e6e6e"/></svg><svg style="position:absolute;left:726px;top:1430.05px;" width="30" height="24" viewBox="0 0 30 24"><path d="M1.5 21.5 V3 Q1.5 1.5 3 1.5 H9.5 L12 4.5 H23 Q24.5 4.5 24.5 6 V9" fill="none" stroke="#c8c8c8" stroke-width="2.4"/><path d="M2 22.5 L7 10 H29 L24 22.5 Z" fill="#c8c8c8"/></svg><div class="t" style="left:757px;top:1426.5px;height:29px;line-height:29px;font-size:23px;color:#d0d0d0;font-weight:400;letter-spacing:0.25px;">Scenes</div><svg style="position:absolute;left:731.0px;top:1463.1px;" width="12" height="16" viewBox="0 0 12 16"><polygon points="0,0 12,8.0 0,16" fill="#6e6e6e"/></svg><svg style="position:absolute;left:754px;top:1461.1px;" width="24" height="20" viewBox="0 0 24 20"><path d="M1 2.5 Q1 1 2.5 1 H8.5 L11 3.5 H21.5 Q23 3.5 23 5 V18 Q23 19.5 21.5 19.5 H2.5 Q1 19.5 1 18 Z" fill="#c8c8c8"/></svg><div class="t" style="left:784px;top:1456.6px;height:29px;line-height:29px;font-size:23px;color:#d0d0d0;font-weight:400;letter-spacing:0.25px;">ClientLoungeScene</div><svg style="position:absolute;left:731.0px;top:1493.15px;" width="12" height="16" viewBox="0 0 12 16"><polygon points="0,0 12,8.0 0,16" fill="#6e6e6e"/></svg><svg style="position:absolute;left:754px;top:1491.15px;" width="24" height="20" viewBox="0 0 24 20"><path d="M1 2.5 Q1 1 2.5 1 H8.5 L11 3.5 H21.5 Q23 3.5 23 5 V18 Q23 19.5 21.5 19.5 H2.5 Q1 19.5 1 18 Z" fill="#c8c8c8"/></svg><div class="t" style="left:784px;top:1486.7px;height:29px;line-height:29px;font-size:23px;color:#d0d0d0;font-weight:400;letter-spacing:0.25px;">LobbyScene</div><svg style="position:absolute;left:731.0px;top:1523.2px;" width="12" height="16" viewBox="0 0 12 16"><polygon points="0,0 12,8.0 0,16" fill="#6e6e6e"/></svg><svg style="position:absolute;left:754px;top:1521.2px;" width="24" height="20" viewBox="0 0 24 20"><path d="M1 2.5 Q1 1 2.5 1 H8.5 L11 3.5 H21.5 Q23 3.5 23 5 V18 Q23 19.5 21.5 19.5 H2.5 Q1 19.5 1 18 Z" fill="#c8c8c8"/></svg><div class="t" style="left:784px;top:1516.7px;height:29px;line-height:29px;font-size:23px;color:#d0d0d0;font-weight:400;letter-spacing:0.25px;">SampleScene</div><div style="left:667px;top:1542px;width:1367px;height:38px;background:#3c3c3c;"></div><div style="left:2008px;top:1088px;width:26px;height:454px;background:#383838;"></div><svg style="position:absolute;left:2014.0px;top:1100.0px;" width="14" height="8" viewBox="0 0 14 8"><polygon points="0,8 14,8 7.0,0" fill="#c4c4c4"/></svg><div style="left:2011px;top:1119px;width:19px;height:78px;background:#5e5e5e;border-radius:9px;"></div><svg style="position:absolute;left:2014.0px;top:1522.0px;" width="14" height="8" viewBox="0 0 14 8"><polygon points="0,0 14,0 7.0,8" fill="#c4c4c4"/></svg><div style="left:2034px;top:1001px;width:3px;height:617px;background:#191919;"></div><svg style="position:absolute;left:2056px;top:1334px;" width="23" height="21" viewBox="0 0 23 21"><path d="M1 2.5 Q1 1 2.5 1 H9 L11.5 4 H20.5 Q22 4 22 5.5 V19 Q22 20.5 20.5 20.5 H2.5 Q1 20.5 1 19 Z" fill="#c8c8c8"/></svg><div class="t" style="left:2086px;top:1329.5px;height:29px;line-height:29px;font-size:23px;color:#d0d0d0;font-weight:400;letter-spacing:0.25px;">Project</div><svg style="position:absolute;left:2812px;top:1333px;" width="18" height="22" viewBox="0 0 18 22"><rect x="1" y="9" width="16" height="12" fill="#c4c4c4"/><path d="M4 10 V6 A5 5 0 0 1 14 6 V10" fill="none" stroke="#c4c4c4" stroke-width="2.4"/></svg><svg style="position:absolute;left:2849px;top:1332px;" width="8" height="24" viewBox="0 0 8 24"><circle cx="4" cy="3.5" r="3" fill="#c4c4c4"/><circle cx="4" cy="12" r="3" fill="#c4c4c4"/><circle cx="4" cy="20.5" r="3" fill="#c4c4c4"/></svg><svg style="position:absolute;left:2049px;top:1371px;" width="26" height="26" viewBox="0 0 26 26"><path d="M13 2 V24 M2 13 H24" stroke="#d0d0d0" stroke-width="3.4"/></svg><svg style="position:absolute;left:2081.0px;top:1380.0px;" width="14" height="8" viewBox="0 0 14 8"><polygon points="0,0 14,0 7.0,8" fill="#c4c4c4"/></svg><div style="left:2123px;top:1369px;width:523px;height:29px;background:#2a2a2a;border-radius:7px;border:1px solid #222;"></div><svg style="position:absolute;left:2131px;top:1376px;" width="16" height="16" viewBox="0 0 16 16"><circle cx="6" cy="6" r="4.3" fill="none" stroke="#bcbcbc" stroke-width="2"/><path d="M9 9 L14 14" stroke="#bcbcbc" stroke-width="2.6"/></svg><div style="left:2614px;top:1370px;width:31px;height:27px;background:#303030;border-radius:0 6px 6px 0;"></div><svg style="position:absolute;left:2618px;top:1372px;" width="24" height="22" viewBox="0 0 24 22"><g fill="none" stroke="#c4c4c4" stroke-width="1.8"><rect x="5" y="1.5" width="17" height="15"/><rect x="1.5" y="13" width="8" height="8"/><path d="M10 12 L17 5 M12 5 H17 V10"/></g></svg><div style="left:2651px;top:1365px;width:2px;height:38px;background:#2c2c2c;"></div><div style="left:2700px;top:1365px;width:2px;height:38px;background:#2c2c2c;"></div><div style="left:2749px;top:1365px;width:2px;height:38px;background:#2c2c2c;"></div><div style="left:2798px;top:1365px;width:2px;height:38px;background:#2c2c2c;"></div><svg style="position:absolute;left:2663px;top:1371px;" width="26" height="26" viewBox="0 0 26 26"><rect x="6" y="1" width="9" height="9" fill="#c8c8c8"/><circle cx="8" cy="18" r="7" fill="#c8c8c8"/><polygon points="18,9 25,21 11,21" fill="#c8c8c8"/></svg><svg style="position:absolute;left:2713px;top:1372px;" width="24" height="24" viewBox="0 0 24 24"><path d="M12 2 H22 V12 L11 23 L1 13 Z" fill="#c8c8c8"/><circle cx="17" cy="7" r="2.3" fill="#3c3c3c"/></svg><svg style="position:absolute;left:2760px;top:1371px;" width="26" height="26" viewBox="0 0 26 26"><polygon points="8,1 18,1 25,8 25,18 18,25 8,25 1,18 1,8" fill="#c8c8c8"/><rect x="11.5" y="5" width="3" height="11" fill="#3c3c3c"/><circle cx="13" cy="20" r="2" fill="#3c3c3c"/></svg><svg style="position:absolute;left:2811px;top:1375px;" width="30" height="18" viewBox="0 0 30 18"><path d="M1 9 Q15 -4 29 9 Q15 22 1 9 Z" fill="none" stroke="#7e7e7e" stroke-width="2"/><circle cx="15" cy="9" r="5" fill="#7e7e7e"/></svg><div class="t" style="left:2842px;top:1369.5px;height:29px;line-height:29px;font-size:23px;color:#c4c4c4;font-weight:400;letter-spacing:0.5px;">38</div><div style="left:2037px;top:1403px;width:841px;height:1px;background:#262626;"></div><div style="left:2037px;top:1404px;width:841px;height:137px;overflow:hidden;"><svg style="position:absolute;left:65.0px;top:6.7999999999999545px;" width="12" height="16" viewBox="0 0 12 16"><polygon points="0,0 12,8.0 0,16" fill="#6e6e6e"/></svg><svg style="position:absolute;left:85px;top:4.7999999999999545px;" width="24" height="20" viewBox="0 0 24 20"><path d="M1 2.5 Q1 1 2.5 1 H8.5 L11 3.5 H21.5 Q23 3.5 23 5 V18 Q23 19.5 21.5 19.5 H2.5 Q1 19.5 1 18 Z" fill="#c8c8c8"/></svg><div class="t" style="left:117px;top:0.3px;height:29px;line-height:29px;font-size:23px;color:#d0d0d0;font-weight:400;letter-spacing:0.25px;">LobbyScene</div><svg style="position:absolute;left:65.0px;top:36.84999999999991px;" width="12" height="16" viewBox="0 0 12 16"><polygon points="0,0 12,8.0 0,16" fill="#6e6e6e"/></svg><svg style="position:absolute;left:85px;top:34.84999999999991px;" width="24" height="20" viewBox="0 0 24 20"><path d="M1 2.5 Q1 1 2.5 1 H8.5 L11 3.5 H21.5 Q23 3.5 23 5 V18 Q23 19.5 21.5 19.5 H2.5 Q1 19.5 1 18 Z" fill="#c8c8c8"/></svg><div class="t" style="left:117px;top:30.3px;height:29px;line-height:29px;font-size:23px;color:#d0d0d0;font-weight:400;letter-spacing:0.25px;">SampleScene</div><svg style="position:absolute;left:65.0px;top:66.89999999999986px;" width="12" height="16" viewBox="0 0 12 16"><polygon points="0,0 12,8.0 0,16" fill="#6e6e6e"/></svg><svg style="position:absolute;left:85px;top:64.89999999999986px;" width="24" height="20" viewBox="0 0 24 20"><path d="M1 2.5 Q1 1 2.5 1 H8.5 L11 3.5 H21.5 Q23 3.5 23 5 V18 Q23 19.5 21.5 19.5 H2.5 Q1 19.5 1 18 Z" fill="#c8c8c8"/></svg><div class="t" style="left:117px;top:60.4px;height:29px;line-height:29px;font-size:23px;color:#d0d0d0;font-weight:400;letter-spacing:0.25px;">ServerEntryScene</div><svg style="position:absolute;left:65.0px;top:96.95000000000005px;" width="12" height="16" viewBox="0 0 12 16"><polygon points="0,0 12,8.0 0,16" fill="#6e6e6e"/></svg><svg style="position:absolute;left:85px;top:94.95000000000005px;" width="24" height="20" viewBox="0 0 24 20"><path d="M1 2.5 Q1 1 2.5 1 H8.5 L11 3.5 H21.5 Q23 3.5 23 5 V18 Q23 19.5 21.5 19.5 H2.5 Q1 19.5 1 18 Z" fill="#c8c8c8"/></svg><div class="t" style="left:117px;top:90.5px;height:29px;line-height:29px;font-size:23px;color:#d0d0d0;font-weight:400;letter-spacing:0.25px;">ServerLoungeScene</div><svg style="position:absolute;left:85px;top:123.0px;" width="26" height="26" viewBox="0 0 26 26"><g fill="none" stroke="#e0e0e0" stroke-width="3" stroke-linejoin="round"><path d="M13 2 L24 8 V19 L13 25 L2 19 V8 Z M13 13 V25 M13 13 L24 8 M13 13 L2 8"/></g></svg><div class="t" style="left:117px;top:120.5px;height:29px;line-height:29px;font-size:23px;color:#d0d0d0;font-weight:400;letter-spacing:0.25px;">ClientEntryScene</div></div><div style="left:2851px;top:1404px;width:27px;height:137px;background:#383838;"></div><svg style="position:absolute;left:2859.0px;top:1416.0px;" width="14" height="8" viewBox="0 0 14 8"><polygon points="0,8 14,8 7.0,0" fill="#c4c4c4"/></svg><div style="left:2858px;top:1438px;width:18px;height:36px;background:#5e5e5e;border-radius:9px;"></div><svg style="position:absolute;left:2859.0px;top:1523.0px;" width="14" height="8" viewBox="0 0 14 8"><polygon points="0,0 14,0 7.0,8" fill="#c4c4c4"/></svg><div style="left:0px;top:1580px;width:2878px;height:38px;background:#141414;"></div><div style="left:2733px;top:1587px;width:1px;height:25px;background:#2e2e2e;"></div><div style="left:2781px;top:1587px;width:1px;height:25px;background:#2e2e2e;"></div><div style="left:2830px;top:1587px;width:1px;height:25px;background:#2e2e2e;"></div><svg style="position:absolute;left:2744px;top:1590px;" width="27" height="27" viewBox="0 0 27 27"><g fill="#b8b8b8"><ellipse cx="13.5" cy="16" rx="7" ry="9"/><ellipse cx="13.5" cy="6" rx="4.5" ry="3"/></g><g stroke="#b8b8b8" stroke-width="2" fill="none"><path d="M1 10 L6 13 M26 10 L21 13 M1 17 H6 M26 17 H21 M2 25 L7 21 M25 25 L20 21 M2 2 L25 25"/></g></svg><svg style="position:absolute;left:2793px;top:1590px;" width="26" height="27" viewBox="0 0 26 27"><g fill="#b8b8b8"><ellipse cx="13" cy="5" rx="10" ry="4"/><path d="M3 8 Q13 14 23 8 V12 Q13 18 3 12 Z"/><path d="M3 15 Q13 21 23 15 V19 Q13 25 3 19 Z"/></g><path d="M2 2 L24 25" stroke="#b8b8b8" stroke-width="2"/></svg><svg style="position:absolute;left:2841px;top:1591px;" width="27" height="27" viewBox="0 0 27 27"><circle cx="13.5" cy="13.5" r="11.5" fill="none" stroke="#b8b8b8" stroke-width="2"/><path d="M8 13.5 L12 17.5 L19 9.5" fill="none" stroke="#b8b8b8" stroke-width="2.2"/></svg>
</body></html>
